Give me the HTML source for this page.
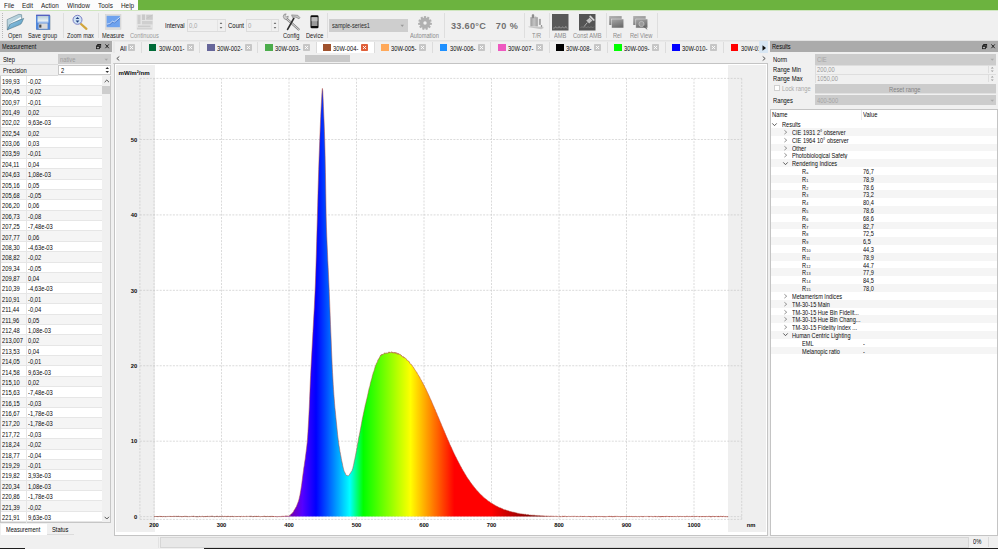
<!DOCTYPE html><html><head><meta charset="utf-8"><style>
*{box-sizing:border-box;margin:0;padding:0}
html,body{width:998px;height:549px;overflow:hidden;background:#f0f0f0;font-family:"Liberation Sans", sans-serif;color:#1a1a1a}
.a{position:absolute}
.t{position:absolute;white-space:nowrap;line-height:1;margin-top:0.8px}
sub{font-size:4.3px;vertical-align:baseline;margin-left:0.3px}
</style></head><body>

<div class="a" style="left:0;top:0;width:998px;height:10px;background:#fcfcfc"></div>
<div class="a" style="left:138px;top:0;width:860px;height:10px;background:#6cb33f"></div>
<div class="a" style="left:0;top:10px;width:998px;height:1px;background:#cfe6bf"></div>
<div class="t" style="transform:scaleX(0.8696);transform-origin:0 0;left:3.8px;top:1.09px;font-size:7.36px">File</div>
<div class="t" style="transform:scaleX(0.8696);transform-origin:0 0;left:21.7px;top:1.09px;font-size:7.36px">Edit</div>
<div class="t" style="transform:scaleX(0.8696);transform-origin:0 0;left:40.8px;top:1.09px;font-size:7.36px">Action</div>
<div class="t" style="transform:scaleX(0.8696);transform-origin:0 0;left:67px;top:1.09px;font-size:7.36px">Window</div>
<div class="t" style="transform:scaleX(0.8696);transform-origin:0 0;left:98.2px;top:1.09px;font-size:7.36px">Tools</div>
<div class="t" style="transform:scaleX(0.8696);transform-origin:0 0;left:121.1px;top:1.09px;font-size:7.36px">Help</div>
<div class="a" style="left:0;top:11px;width:998px;height:29px;background:#f0f0f0"></div>
<div class="a" style="left:2px;top:13px;width:1px;height:25px;border-left:1px dotted #b8b8b8"></div>
<div class="a" style="left:62.5px;top:13px;width:0.8px;height:25px;background:#dedede"></div>
<div class="a" style="left:97.5px;top:13px;width:0.8px;height:25px;background:#dedede"></div>
<div class="a" style="left:327.3px;top:13px;width:0.8px;height:25px;background:#dedede"></div>
<div class="a" style="left:444.3px;top:13px;width:0.8px;height:25px;background:#dedede"></div>
<div class="a" style="left:524.2px;top:13px;width:0.8px;height:25px;background:#dedede"></div>
<div class="a" style="left:548.8px;top:13px;width:0.8px;height:25px;background:#dedede"></div>
<div class="a" style="left:605.6px;top:13px;width:0.8px;height:25px;background:#dedede"></div>
<div class="a" style="left:656.7px;top:13px;width:0.8px;height:25px;background:#dedede"></div>
<div class="t" style="transform:scaleX(0.8696);transform-origin:0 0;left:8px;top:32.58px;font-size:6.55px;color:#222">Open</div>
<div class="t" style="transform:scaleX(0.8696);transform-origin:0 0;left:28px;top:32.58px;font-size:6.55px;color:#222">Save group</div>
<div class="t" style="transform:scaleX(0.8696);transform-origin:0 0;left:66.7px;top:32.58px;font-size:6.55px;color:#222">Zoom max</div>
<div class="t" style="transform:scaleX(0.8696);transform-origin:0 0;left:102px;top:32.58px;font-size:6.55px;color:#222">Measure</div>
<div class="t" style="transform:scaleX(0.8696);transform-origin:0 0;left:129.9px;top:32.58px;font-size:6.55px;color:#9a9a9a">Continuous</div>
<div class="t" style="transform:scaleX(0.8696);transform-origin:0 0;left:283.1px;top:32.58px;font-size:6.55px;color:#222">Config</div>
<div class="t" style="transform:scaleX(0.8696);transform-origin:0 0;left:306px;top:32.58px;font-size:6.55px;color:#222">Device</div>
<div class="t" style="transform:scaleX(0.8696);transform-origin:0 0;left:410.4px;top:32.58px;font-size:6.55px;color:#8a8a8a">Automation</div>
<div class="t" style="transform:scaleX(0.8696);transform-origin:0 0;left:532px;top:32.58px;font-size:6.55px;color:#8a8a8a">T/R</div>
<div class="t" style="transform:scaleX(0.8696);transform-origin:0 0;left:554.4px;top:32.58px;font-size:6.55px;color:#8a8a8a">AMB</div>
<div class="t" style="transform:scaleX(0.8696);transform-origin:0 0;left:573px;top:32.58px;font-size:6.55px;color:#8a8a8a">Const AMB</div>
<div class="t" style="transform:scaleX(0.8696);transform-origin:0 0;left:613.3px;top:32.58px;font-size:6.55px;color:#8a8a8a">Rel</div>
<div class="t" style="transform:scaleX(0.8696);transform-origin:0 0;left:630px;top:32.58px;font-size:6.55px;color:#8a8a8a">Rel View</div>
<svg class="a" style="left:4px;top:11px;width:24px;height:22px;overflow:visible" viewBox="0 0 24 22">
<defs><linearGradient id="fo" x1="0" y1="0" x2="1" y2="1"><stop offset="0" stop-color="#9fd0ea"/><stop offset="1" stop-color="#4d93bd"/></linearGradient>
<linearGradient id="fb" x1="0" y1="0" x2="1" y2="1"><stop offset="0" stop-color="#cfe3ea"/><stop offset="1" stop-color="#8fb6c8"/></linearGradient></defs>
<path d="M3.3,18.8 L3.2,8.6 L14.8,3.3 L17.6,3.7 L17.8,8.5 Z" fill="url(#fb)" stroke="#5f7f8f" stroke-width="0.6"/>
<path d="M5.6,12.6 L16.6,6.0 L17.4,7.6 L6.2,13.8 Z" fill="#ffffff"/>
<path d="M3.3,18.8 L6.2,13.0 L19.7,7.4 L17.6,12.0 Q17.1,13.1 15.9,13.6 Z" fill="url(#fo)" stroke="#4c7487" stroke-width="0.6"/>
</svg>
<svg class="a" style="left:35px;top:14px;width:16px;height:17px;overflow:visible" viewBox="0 0 16 17">
<defs><linearGradient id="fl" x1="0" y1="0" x2="0" y2="1"><stop offset="0" stop-color="#b6cdd8"/><stop offset="1" stop-color="#eef4f6"/></linearGradient></defs>
<rect x="1.2" y="1.3" width="14.2" height="14.8" rx="0.6" fill="#8898a8"/>
<rect x="1" y="0.8" width="13.9" height="14.6" rx="0.6" fill="#4f86db"/>
<rect x="1" y="0.8" width="13.9" height="0.9" fill="#5b4fb4"/>
<rect x="2.5" y="2" width="10.9" height="5.3" fill="url(#fl)"/>
<rect x="2.5" y="7.3" width="10.9" height="1.2" fill="#e4eef8"/>
<rect x="3.6" y="9.4" width="9" height="5.4" fill="#dadada"/>
<rect x="4.2" y="10.6" width="2.2" height="3" fill="#4a4a4a"/>
</svg>
<svg class="a" style="left:70px;top:13px;width:20px;height:19px;overflow:visible" viewBox="0 0 20 19">
<line x1="11" y1="11" x2="16.4" y2="15.8" stroke="#d2a63c" stroke-width="2.3" stroke-linecap="round"/>
<circle cx="7.5" cy="6.8" r="4.5" fill="#cfe3f4" stroke="#7d80c6" stroke-width="1.0"/>
<path d="M7.5,3.9 L9.4,6.1 L5.6,6.1 Z M7.5,9.8 L9.4,7.5 L5.6,7.5 Z" fill="#203d80"/>
</svg>
<svg class="a" style="left:104.5px;top:14px;width:17px;height:16px;overflow:visible" viewBox="0 0 17 16">
<rect x="0.5" y="0.5" width="15.5" height="14.8" fill="#dcdcdc" stroke="#cfcfcf" stroke-width="0.5"/>
<rect x="1.6" y="1.8" width="13.3" height="11.4" fill="#6ea2ee"/>
<path d="M1.8,10.2 L4.8,9.6 L7.4,7.2 L9.3,8.1 L14.8,3.4" fill="none" stroke="#4f7fd0" stroke-width="1.2" transform="translate(0,0.8)"/>
<path d="M1.8,10.2 L4.8,9.6 L7.4,7.2 L9.3,8.1 L14.8,3.4" fill="none" stroke="#d6e4fa" stroke-width="0.9"/>
</svg>
<svg class="a" style="left:132px;top:11px;width:26px;height:20px;overflow:visible" viewBox="0 0 26 20">
<rect x="4.5" y="3.2" width="16.5" height="15.5" fill="#e4e4e4"/>
<rect x="5.5" y="4" width="3" height="9" fill="#cdcdcd"/>
<rect x="10" y="3.5" width="3" height="5.5" fill="#c9c9c9"/>
<rect x="14.2" y="3.8" width="6.5" height="5" fill="#cbcbcb"/>
<path d="M14.5,7.5 L17,6 L20.5,4" stroke="#bdbdbd" stroke-width="0.6" fill="none"/>
<rect x="10" y="10" width="10.5" height="3.4" fill="#cfcfcf"/>
<rect x="6" y="14.5" width="12.5" height="1.6" fill="#cbcbcb"/>
<rect x="5" y="16.8" width="14.8" height="1.6" fill="#d2d2d2"/>
</svg>
<div class="t" style="transform:scaleX(0.8696);transform-origin:0 0;left:164.6px;top:22.34px;font-size:6.90px;color:#0a0a0a">Interval</div>
<div class="t" style="transform:scaleX(0.8696);transform-origin:0 0;left:228px;top:22.34px;font-size:6.90px;color:#0a0a0a">Count</div>
<div class="a" style="left:187.2px;top:19.2px;width:38.4px;height:12.8px;border:1px solid #dcdcdc;background:#f0f0f0"></div>
<div class="t" style="transform:scaleX(0.8696);transform-origin:0 0;left:189.2px;top:22.24px;font-size:6.90px;color:#a8a8a8">0,0</div>
<div class="a" style="left:217.1px;top:20px;width:1px;height:11px;background:#e4e4e4"></div>
<svg class="a" style="left:219.1px;top:21px;width:4px;height:9px;overflow:visible" viewBox="0 0 4 9"><path d="M0.7,3 L2,1.3 L3.3,3 Z M0.7,6 L2,7.7 L3.3,6 Z" fill="#6a6a6a"/></svg>
<div class="a" style="left:246.1px;top:19.2px;width:33.3px;height:12.8px;border:1px solid #dcdcdc;background:#f0f0f0"></div>
<div class="t" style="transform:scaleX(0.8696);transform-origin:0 0;left:248.1px;top:22.24px;font-size:6.90px;color:#a8a8a8">0</div>
<div class="a" style="left:270.9px;top:20px;width:1px;height:11px;background:#e4e4e4"></div>
<svg class="a" style="left:272.9px;top:21px;width:4px;height:9px;overflow:visible" viewBox="0 0 4 9"><path d="M0.7,3 L2,1.3 L3.3,3 Z M0.7,6 L2,7.7 L3.3,6 Z" fill="#6a6a6a"/></svg>
<svg class="a" style="left:278px;top:10px;width:24px;height:22px;overflow:visible" viewBox="0 0 24 22">
<path d="M8.2,8.4 L20.6,19.4" stroke="#6f6f6f" stroke-width="2.1" stroke-linecap="round"/>
<path d="M8.2,8.4 L20.6,19.4" stroke="#d0d0d0" stroke-width="1.2" stroke-linecap="round"/>
<path d="M5.2,6.2 Q5.6,3.6 8.2,3.9 L7.2,5.6 L8.6,7.0 L10.2,6.0 Q10.6,8.6 8.2,9.6 Q5.6,9.6 5.2,6.2 Z" fill="#cfcfcf" stroke="#707070" stroke-width="0.55"/>
<path d="M9.6,19.4 L15.8,8.4" stroke="#2e2e2e" stroke-width="1.7" stroke-linecap="round"/>
<path d="M13.6,4.9 L19.8,5.3 L22.0,7.8 L21.0,8.8 L18.0,7.3 L15.8,7.0 L14.6,7.6 Z" fill="#c4c4c4" stroke="#6a6a6a" stroke-width="0.55"/>
</svg>
<svg class="a" style="left:310px;top:15.3px;width:9px;height:14px;overflow:visible" viewBox="0 0 9 14">
<rect x="0.5" y="0.3" width="8" height="13" rx="1.3" fill="#0d0d0d"/>
<rect x="1.5" y="2.2" width="6" height="8.8" fill="#9a9a9a"/>
<rect x="1.5" y="2.2" width="6" height="4" fill="#bcbcbc"/>
</svg>
<div class="a" style="left:329.1px;top:19px;width:78.5px;height:12.6px;background:#cecece"></div>
<div class="t" style="transform:scaleX(0.8696);transform-origin:0 0;left:331.5px;top:22.39px;font-size:6.44px;color:#2a2a2a">sample-series1</div>
<svg class="a" style="left:399.5px;top:23.5px;width:5px;height:4px;overflow:visible" viewBox="0 0 5 4"><path d="M0.5,0.8 L4,0.8 L2.25,3 Z" fill="#9a9a9a"/></svg>
<svg class="a" style="left:418.3px;top:16px;width:14px;height:14px;overflow:visible" viewBox="0 0 14 14"><g transform="translate(7,7)"><rect x="-1.1" y="-6.9" width="2.2" height="2.6" fill="#b0b0b0" transform="rotate(0.0)"/><rect x="-1.1" y="-6.9" width="2.2" height="2.6" fill="#b0b0b0" transform="rotate(32.7)"/><rect x="-1.1" y="-6.9" width="2.2" height="2.6" fill="#b0b0b0" transform="rotate(65.5)"/><rect x="-1.1" y="-6.9" width="2.2" height="2.6" fill="#b0b0b0" transform="rotate(98.2)"/><rect x="-1.1" y="-6.9" width="2.2" height="2.6" fill="#b0b0b0" transform="rotate(130.9)"/><rect x="-1.1" y="-6.9" width="2.2" height="2.6" fill="#b0b0b0" transform="rotate(163.6)"/><rect x="-1.1" y="-6.9" width="2.2" height="2.6" fill="#b0b0b0" transform="rotate(196.4)"/><rect x="-1.1" y="-6.9" width="2.2" height="2.6" fill="#b0b0b0" transform="rotate(229.1)"/><rect x="-1.1" y="-6.9" width="2.2" height="2.6" fill="#b0b0b0" transform="rotate(261.8)"/><rect x="-1.1" y="-6.9" width="2.2" height="2.6" fill="#b0b0b0" transform="rotate(294.5)"/><rect x="-1.1" y="-6.9" width="2.2" height="2.6" fill="#b0b0b0" transform="rotate(327.3)"/><circle r="5.4" fill="#b0b0b0"/><circle r="1.7" fill="#f0f0f0"/></g></svg>
<div class="t" style="left:451px;top:21.2px;font-size:9.1px;font-weight:bold;color:#707070;letter-spacing:0.3px">33.60°C</div>
<div class="t" style="left:495.7px;top:21.2px;font-size:9.1px;font-weight:bold;color:#707070;letter-spacing:0.5px">70 %</div>
<svg class="a" style="left:526px;top:12px;width:22px;height:20px;overflow:visible" viewBox="0 0 22 20">
<defs><linearGradient id="trg" x1="0" y1="0" x2="1" y2="0"><stop offset="0" stop-color="#9a9a9a"/><stop offset="0.5" stop-color="#c4c4c4"/><stop offset="1" stop-color="#9c9c9c"/></linearGradient></defs>
<path d="M2.2,14.4 L17.2,14.8 L17.6,16.0 L15.3,17.2 L2.8,15.2 Z" fill="#c6c6c6"/>
<rect x="4.4" y="5.2" width="7.4" height="9.2" fill="url(#trg)"/>
<rect x="5.8" y="2.2" width="2.4" height="4" rx="0.8" fill="#8c8c8c"/>
<rect x="8.6" y="4.6" width="1.8" height="2" fill="#b0b0b0"/>
<rect x="12.9" y="6.9" width="2" height="6" fill="#a6a6a6"/>
<rect x="14.9" y="13" width="1.2" height="2.2" fill="#9a9a9a"/>
</svg>
<svg class="a" style="left:551.5px;top:13.8px;width:17px;height:17px;overflow:visible" viewBox="0 0 17 17">
<rect x="0" y="0" width="16.5" height="16.5" fill="#585858"/>
<path d="M1,14.2 L3,13.8 L3.6,12.6 L4.2,13.8 L6.5,13.8 L7.1,12.4 L7.7,13.8 L10,13.8 L10.6,12.6 L11.2,13.8 L13.2,13.8 L13.8,12.2 L14.4,13.8 L15.5,14.2" fill="none" stroke="#a8a8a8" stroke-width="0.6"/>
</svg>
<svg class="a" style="left:578.5px;top:13.8px;width:17px;height:17px;overflow:visible" viewBox="0 0 17 17">
<rect x="0" y="0" width="16.5" height="16.5" fill="#545454"/>
<path d="M1.5,14 L3,12.5 L4.5,14 L6,12.5 L7.5,14 L9,12.5 L10.5,14 L12,12.5 L13.5,14 L15,12.5" fill="none" stroke="#8a8a8a" stroke-width="0.6"/>
<path d="M8.3,8.6 L5.0,12.6" stroke="#cfcfcf" stroke-width="0.7"/>
<path d="M10.4,3.6 L13.6,6.8 L12.2,7.4 L10.2,9.6 L7.2,6.6 L9.6,4.8 Z" fill="#c4c4c4"/>
<path d="M11.2,2.4 L14.8,6" stroke="#d8d8d8" stroke-width="1.7" stroke-linecap="round"/>
</svg>
<svg class="a" style="left:604px;top:11px;width:52px;height:22px;overflow:visible" viewBox="0 0 52 22"><defs><linearGradient id="rg1" x1="0" y1="0" x2="0.3" y2="1"><stop offset="0" stop-color="#b4b4b4"/><stop offset="1" stop-color="#808080"/></linearGradient><linearGradient id="rg2" x1="0" y1="0" x2="0.4" y2="1"><stop offset="0" stop-color="#a8a8a8"/><stop offset="1" stop-color="#6e6e6e"/></linearGradient></defs>
<rect x="5.2" y="5" width="12.5" height="9" fill="url(#rg1)"/>
<rect x="7.6" y="8" width="12.2" height="9" fill="url(#rg2)" stroke="#ececec" stroke-width="0.5"/>
<rect x="29.2" y="5" width="12.5" height="9" fill="url(#rg1)"/>
<rect x="31.8" y="8" width="12" height="9" fill="url(#rg2)" stroke="#ececec" stroke-width="0.5"/>
<circle cx="37.5" cy="13" r="2.6" fill="#9a9a9a" stroke="#d0d0d0" stroke-width="0.6"/>
<path d="M39.4,15 L43.2,18.3" stroke="#5a5a5a" stroke-width="0.9"/>
</svg>
<div class="a" style="left:0;top:39.8px;width:998px;height:0.8px;background:#e2e2e2"></div>
<div class="a" style="left:0px;top:40.8px;width:112px;height:11.5px;background:#ababab"></div>
<div class="t" style="transform:scaleX(0.8696);transform-origin:0 0;left:2.2px;top:42.89px;font-size:6.44px;color:#0a0a0a">Measurement</div>
<svg class="a" style="left:96.2px;top:43.8px;width:5px;height:5.2px;overflow:visible" viewBox="0 0 5 5.2"><rect x="1.7" y="0.5" width="3" height="2.8" fill="none" stroke="#1a1a1a" stroke-width="0.8"/><rect x="1.7" y="0.3" width="3" height="1" fill="#1a1a1a"/><rect x="0.5" y="1.9" width="3" height="2.8" fill="#ababab" stroke="#1a1a1a" stroke-width="0.8"/><rect x="0.5" y="1.7" width="3" height="1" fill="#1a1a1a"/></svg>
<svg class="a" style="left:105px;top:44.2px;width:4.2px;height:4.6px;overflow:visible" viewBox="0 0 4.2 4.6"><path d="M0.4,0.4 L3.8,4.2 M3.8,0.4 L0.4,4.2" stroke="#1a1a1a" stroke-width="0.95"/></svg>
<div class="a" style="left:0;top:52.5px;width:112px;height:23px;background:#f0f0f0"></div>
<div class="a" style="left:0;top:64px;width:58px;height:0.7px;background:#dadada"></div>
<div class="a" style="left:0;top:75px;width:58px;height:0.7px;background:#dadada"></div>
<div class="t" style="transform:scaleX(0.8696);transform-origin:0 0;left:3px;top:55.76px;font-size:6.67px;color:#0a0a0a">Step</div>
<div class="t" style="transform:scaleX(0.8696);transform-origin:0 0;left:3px;top:66.96px;font-size:6.67px;color:#0a0a0a">Precision</div>
<div class="a" style="left:58.2px;top:54.1px;width:52.4px;height:10px;background:#cccccc"></div>
<div class="t" style="transform:scaleX(0.8696);transform-origin:0 0;left:60px;top:56.26px;font-size:6.67px;color:#9d9d9d">native</div>
<svg class="a" style="left:104px;top:57.5px;width:5px;height:4px;overflow:visible" viewBox="0 0 5 4"><path d="M0.5,0.8 L4,0.8 L2.25,2.8 Z" fill="#a8a8a8"/></svg>
<div class="a" style="left:58.2px;top:65.3px;width:52.4px;height:9.6px;background:#fff;border:0.7px solid #c8c8c8"></div>
<div class="t" style="transform:scaleX(0.8696);transform-origin:0 0;left:60.5px;top:66.96px;font-size:6.67px;color:#0a0a0a">2</div>
<svg class="a" style="left:104.5px;top:66.3px;width:5px;height:8px;overflow:visible" viewBox="0 0 5 8"><path d="M0.5,3 L2.25,1 L4,3 Z M0.5,5 L2.25,7 L4,5 Z" fill="#333"/></svg>
<div class="a" style="left:0;top:75.6px;width:111px;height:447.4px;background:#fff;border:0.8px solid #c6c6c6"></div>
<div class="a" style="left:0.8px;top:75.70px;width:101px;height:10.38px;background:#ffffff;border-bottom:0.7px solid #e6e6e6"></div>
<div class="t" style="transform:scaleX(0.8696);transform-origin:0 0;left:2.2px;top:77.96px;font-size:6.67px;color:#0a0a0a">199,93</div>
<div class="t" style="transform:scaleX(0.8696);transform-origin:0 0;left:28px;top:77.96px;font-size:6.67px;color:#0a0a0a">-0,02</div>
<div class="a" style="left:0.8px;top:86.08px;width:101px;height:10.38px;background:#f5f5f5;border-bottom:0.7px solid #e6e6e6"></div>
<div class="t" style="transform:scaleX(0.8696);transform-origin:0 0;left:2.2px;top:88.34px;font-size:6.67px;color:#0a0a0a">200,45</div>
<div class="t" style="transform:scaleX(0.8696);transform-origin:0 0;left:28px;top:88.34px;font-size:6.67px;color:#0a0a0a">-0,02</div>
<div class="a" style="left:0.8px;top:96.47px;width:101px;height:10.38px;background:#ffffff;border-bottom:0.7px solid #e6e6e6"></div>
<div class="t" style="transform:scaleX(0.8696);transform-origin:0 0;left:2.2px;top:98.73px;font-size:6.67px;color:#0a0a0a">200,97</div>
<div class="t" style="transform:scaleX(0.8696);transform-origin:0 0;left:28px;top:98.73px;font-size:6.67px;color:#0a0a0a">-0,01</div>
<div class="a" style="left:0.8px;top:106.85px;width:101px;height:10.38px;background:#f5f5f5;border-bottom:0.7px solid #e6e6e6"></div>
<div class="t" style="transform:scaleX(0.8696);transform-origin:0 0;left:2.2px;top:109.11px;font-size:6.67px;color:#0a0a0a">201,49</div>
<div class="t" style="transform:scaleX(0.8696);transform-origin:0 0;left:28px;top:109.11px;font-size:6.67px;color:#0a0a0a">0,02</div>
<div class="a" style="left:0.8px;top:117.24px;width:101px;height:10.38px;background:#ffffff;border-bottom:0.7px solid #e6e6e6"></div>
<div class="t" style="transform:scaleX(0.8696);transform-origin:0 0;left:2.2px;top:119.50px;font-size:6.67px;color:#0a0a0a">202,02</div>
<div class="t" style="transform:scaleX(0.8696);transform-origin:0 0;left:28px;top:119.50px;font-size:6.67px;color:#0a0a0a">9,63e-03</div>
<div class="a" style="left:0.8px;top:127.62px;width:101px;height:10.38px;background:#f5f5f5;border-bottom:0.7px solid #e6e6e6"></div>
<div class="t" style="transform:scaleX(0.8696);transform-origin:0 0;left:2.2px;top:129.88px;font-size:6.67px;color:#0a0a0a">202,54</div>
<div class="t" style="transform:scaleX(0.8696);transform-origin:0 0;left:28px;top:129.88px;font-size:6.67px;color:#0a0a0a">0,02</div>
<div class="a" style="left:0.8px;top:138.01px;width:101px;height:10.38px;background:#ffffff;border-bottom:0.7px solid #e6e6e6"></div>
<div class="t" style="transform:scaleX(0.8696);transform-origin:0 0;left:2.2px;top:140.27px;font-size:6.67px;color:#0a0a0a">203,06</div>
<div class="t" style="transform:scaleX(0.8696);transform-origin:0 0;left:28px;top:140.27px;font-size:6.67px;color:#0a0a0a">0,03</div>
<div class="a" style="left:0.8px;top:148.39px;width:101px;height:10.38px;background:#f5f5f5;border-bottom:0.7px solid #e6e6e6"></div>
<div class="t" style="transform:scaleX(0.8696);transform-origin:0 0;left:2.2px;top:150.65px;font-size:6.67px;color:#0a0a0a">203,59</div>
<div class="t" style="transform:scaleX(0.8696);transform-origin:0 0;left:28px;top:150.65px;font-size:6.67px;color:#0a0a0a">-0,01</div>
<div class="a" style="left:0.8px;top:158.78px;width:101px;height:10.38px;background:#ffffff;border-bottom:0.7px solid #e6e6e6"></div>
<div class="t" style="transform:scaleX(0.8696);transform-origin:0 0;left:2.2px;top:161.04px;font-size:6.67px;color:#0a0a0a">204,11</div>
<div class="t" style="transform:scaleX(0.8696);transform-origin:0 0;left:28px;top:161.04px;font-size:6.67px;color:#0a0a0a">0,04</div>
<div class="a" style="left:0.8px;top:169.16px;width:101px;height:10.38px;background:#f5f5f5;border-bottom:0.7px solid #e6e6e6"></div>
<div class="t" style="transform:scaleX(0.8696);transform-origin:0 0;left:2.2px;top:171.42px;font-size:6.67px;color:#0a0a0a">204,63</div>
<div class="t" style="transform:scaleX(0.8696);transform-origin:0 0;left:28px;top:171.42px;font-size:6.67px;color:#0a0a0a">1,08e-03</div>
<div class="a" style="left:0.8px;top:179.55px;width:101px;height:10.38px;background:#ffffff;border-bottom:0.7px solid #e6e6e6"></div>
<div class="t" style="transform:scaleX(0.8696);transform-origin:0 0;left:2.2px;top:181.81px;font-size:6.67px;color:#0a0a0a">205,16</div>
<div class="t" style="transform:scaleX(0.8696);transform-origin:0 0;left:28px;top:181.81px;font-size:6.67px;color:#0a0a0a">0,05</div>
<div class="a" style="left:0.8px;top:189.94px;width:101px;height:10.38px;background:#f5f5f5;border-bottom:0.7px solid #e6e6e6"></div>
<div class="t" style="transform:scaleX(0.8696);transform-origin:0 0;left:2.2px;top:192.20px;font-size:6.67px;color:#0a0a0a">205,68</div>
<div class="t" style="transform:scaleX(0.8696);transform-origin:0 0;left:28px;top:192.20px;font-size:6.67px;color:#0a0a0a">-0,05</div>
<div class="a" style="left:0.8px;top:200.32px;width:101px;height:10.38px;background:#ffffff;border-bottom:0.7px solid #e6e6e6"></div>
<div class="t" style="transform:scaleX(0.8696);transform-origin:0 0;left:2.2px;top:202.58px;font-size:6.67px;color:#0a0a0a">206,20</div>
<div class="t" style="transform:scaleX(0.8696);transform-origin:0 0;left:28px;top:202.58px;font-size:6.67px;color:#0a0a0a">0,06</div>
<div class="a" style="left:0.8px;top:210.70px;width:101px;height:10.38px;background:#f5f5f5;border-bottom:0.7px solid #e6e6e6"></div>
<div class="t" style="transform:scaleX(0.8696);transform-origin:0 0;left:2.2px;top:212.96px;font-size:6.67px;color:#0a0a0a">206,73</div>
<div class="t" style="transform:scaleX(0.8696);transform-origin:0 0;left:28px;top:212.96px;font-size:6.67px;color:#0a0a0a">-0,08</div>
<div class="a" style="left:0.8px;top:221.09px;width:101px;height:10.38px;background:#ffffff;border-bottom:0.7px solid #e6e6e6"></div>
<div class="t" style="transform:scaleX(0.8696);transform-origin:0 0;left:2.2px;top:223.35px;font-size:6.67px;color:#0a0a0a">207,25</div>
<div class="t" style="transform:scaleX(0.8696);transform-origin:0 0;left:28px;top:223.35px;font-size:6.67px;color:#0a0a0a">-7,48e-03</div>
<div class="a" style="left:0.8px;top:231.47px;width:101px;height:10.38px;background:#f5f5f5;border-bottom:0.7px solid #e6e6e6"></div>
<div class="t" style="transform:scaleX(0.8696);transform-origin:0 0;left:2.2px;top:233.73px;font-size:6.67px;color:#0a0a0a">207,77</div>
<div class="t" style="transform:scaleX(0.8696);transform-origin:0 0;left:28px;top:233.73px;font-size:6.67px;color:#0a0a0a">0,06</div>
<div class="a" style="left:0.8px;top:241.86px;width:101px;height:10.38px;background:#ffffff;border-bottom:0.7px solid #e6e6e6"></div>
<div class="t" style="transform:scaleX(0.8696);transform-origin:0 0;left:2.2px;top:244.12px;font-size:6.67px;color:#0a0a0a">208,30</div>
<div class="t" style="transform:scaleX(0.8696);transform-origin:0 0;left:28px;top:244.12px;font-size:6.67px;color:#0a0a0a">-4,63e-03</div>
<div class="a" style="left:0.8px;top:252.24px;width:101px;height:10.38px;background:#f5f5f5;border-bottom:0.7px solid #e6e6e6"></div>
<div class="t" style="transform:scaleX(0.8696);transform-origin:0 0;left:2.2px;top:254.50px;font-size:6.67px;color:#0a0a0a">208,82</div>
<div class="t" style="transform:scaleX(0.8696);transform-origin:0 0;left:28px;top:254.50px;font-size:6.67px;color:#0a0a0a">-0,02</div>
<div class="a" style="left:0.8px;top:262.63px;width:101px;height:10.38px;background:#ffffff;border-bottom:0.7px solid #e6e6e6"></div>
<div class="t" style="transform:scaleX(0.8696);transform-origin:0 0;left:2.2px;top:264.89px;font-size:6.67px;color:#0a0a0a">209,34</div>
<div class="t" style="transform:scaleX(0.8696);transform-origin:0 0;left:28px;top:264.89px;font-size:6.67px;color:#0a0a0a">-0,05</div>
<div class="a" style="left:0.8px;top:273.01px;width:101px;height:10.38px;background:#f5f5f5;border-bottom:0.7px solid #e6e6e6"></div>
<div class="t" style="transform:scaleX(0.8696);transform-origin:0 0;left:2.2px;top:275.27px;font-size:6.67px;color:#0a0a0a">209,87</div>
<div class="t" style="transform:scaleX(0.8696);transform-origin:0 0;left:28px;top:275.27px;font-size:6.67px;color:#0a0a0a">0,04</div>
<div class="a" style="left:0.8px;top:283.40px;width:101px;height:10.38px;background:#ffffff;border-bottom:0.7px solid #e6e6e6"></div>
<div class="t" style="transform:scaleX(0.8696);transform-origin:0 0;left:2.2px;top:285.66px;font-size:6.67px;color:#0a0a0a">210,39</div>
<div class="t" style="transform:scaleX(0.8696);transform-origin:0 0;left:28px;top:285.66px;font-size:6.67px;color:#0a0a0a">-4,63e-03</div>
<div class="a" style="left:0.8px;top:293.78px;width:101px;height:10.38px;background:#f5f5f5;border-bottom:0.7px solid #e6e6e6"></div>
<div class="t" style="transform:scaleX(0.8696);transform-origin:0 0;left:2.2px;top:296.04px;font-size:6.67px;color:#0a0a0a">210,91</div>
<div class="t" style="transform:scaleX(0.8696);transform-origin:0 0;left:28px;top:296.04px;font-size:6.67px;color:#0a0a0a">-0,01</div>
<div class="a" style="left:0.8px;top:304.17px;width:101px;height:10.38px;background:#ffffff;border-bottom:0.7px solid #e6e6e6"></div>
<div class="t" style="transform:scaleX(0.8696);transform-origin:0 0;left:2.2px;top:306.43px;font-size:6.67px;color:#0a0a0a">211,44</div>
<div class="t" style="transform:scaleX(0.8696);transform-origin:0 0;left:28px;top:306.43px;font-size:6.67px;color:#0a0a0a">-0,04</div>
<div class="a" style="left:0.8px;top:314.55px;width:101px;height:10.38px;background:#f5f5f5;border-bottom:0.7px solid #e6e6e6"></div>
<div class="t" style="transform:scaleX(0.8696);transform-origin:0 0;left:2.2px;top:316.81px;font-size:6.67px;color:#0a0a0a">211,96</div>
<div class="t" style="transform:scaleX(0.8696);transform-origin:0 0;left:28px;top:316.81px;font-size:6.67px;color:#0a0a0a">0,05</div>
<div class="a" style="left:0.8px;top:324.94px;width:101px;height:10.38px;background:#ffffff;border-bottom:0.7px solid #e6e6e6"></div>
<div class="t" style="transform:scaleX(0.8696);transform-origin:0 0;left:2.2px;top:327.20px;font-size:6.67px;color:#0a0a0a">212,48</div>
<div class="t" style="transform:scaleX(0.8696);transform-origin:0 0;left:28px;top:327.20px;font-size:6.67px;color:#0a0a0a">1,08e-03</div>
<div class="a" style="left:0.8px;top:335.32px;width:101px;height:10.38px;background:#f5f5f5;border-bottom:0.7px solid #e6e6e6"></div>
<div class="t" style="transform:scaleX(0.8696);transform-origin:0 0;left:2.2px;top:337.58px;font-size:6.67px;color:#0a0a0a">213,007</div>
<div class="t" style="transform:scaleX(0.8696);transform-origin:0 0;left:28px;top:337.58px;font-size:6.67px;color:#0a0a0a">0,02</div>
<div class="a" style="left:0.8px;top:345.71px;width:101px;height:10.38px;background:#ffffff;border-bottom:0.7px solid #e6e6e6"></div>
<div class="t" style="transform:scaleX(0.8696);transform-origin:0 0;left:2.2px;top:347.97px;font-size:6.67px;color:#0a0a0a">213,53</div>
<div class="t" style="transform:scaleX(0.8696);transform-origin:0 0;left:28px;top:347.97px;font-size:6.67px;color:#0a0a0a">0,04</div>
<div class="a" style="left:0.8px;top:356.09px;width:101px;height:10.38px;background:#f5f5f5;border-bottom:0.7px solid #e6e6e6"></div>
<div class="t" style="transform:scaleX(0.8696);transform-origin:0 0;left:2.2px;top:358.35px;font-size:6.67px;color:#0a0a0a">214,05</div>
<div class="t" style="transform:scaleX(0.8696);transform-origin:0 0;left:28px;top:358.35px;font-size:6.67px;color:#0a0a0a">-0,01</div>
<div class="a" style="left:0.8px;top:366.48px;width:101px;height:10.38px;background:#ffffff;border-bottom:0.7px solid #e6e6e6"></div>
<div class="t" style="transform:scaleX(0.8696);transform-origin:0 0;left:2.2px;top:368.74px;font-size:6.67px;color:#0a0a0a">214,58</div>
<div class="t" style="transform:scaleX(0.8696);transform-origin:0 0;left:28px;top:368.74px;font-size:6.67px;color:#0a0a0a">9,63e-03</div>
<div class="a" style="left:0.8px;top:376.87px;width:101px;height:10.38px;background:#f5f5f5;border-bottom:0.7px solid #e6e6e6"></div>
<div class="t" style="transform:scaleX(0.8696);transform-origin:0 0;left:2.2px;top:379.13px;font-size:6.67px;color:#0a0a0a">215,10</div>
<div class="t" style="transform:scaleX(0.8696);transform-origin:0 0;left:28px;top:379.13px;font-size:6.67px;color:#0a0a0a">0,02</div>
<div class="a" style="left:0.8px;top:387.25px;width:101px;height:10.38px;background:#ffffff;border-bottom:0.7px solid #e6e6e6"></div>
<div class="t" style="transform:scaleX(0.8696);transform-origin:0 0;left:2.2px;top:389.51px;font-size:6.67px;color:#0a0a0a">215,63</div>
<div class="t" style="transform:scaleX(0.8696);transform-origin:0 0;left:28px;top:389.51px;font-size:6.67px;color:#0a0a0a">-7,48e-03</div>
<div class="a" style="left:0.8px;top:397.63px;width:101px;height:10.38px;background:#f5f5f5;border-bottom:0.7px solid #e6e6e6"></div>
<div class="t" style="transform:scaleX(0.8696);transform-origin:0 0;left:2.2px;top:399.89px;font-size:6.67px;color:#0a0a0a">216,15</div>
<div class="t" style="transform:scaleX(0.8696);transform-origin:0 0;left:28px;top:399.89px;font-size:6.67px;color:#0a0a0a">-0,03</div>
<div class="a" style="left:0.8px;top:408.02px;width:101px;height:10.38px;background:#ffffff;border-bottom:0.7px solid #e6e6e6"></div>
<div class="t" style="transform:scaleX(0.8696);transform-origin:0 0;left:2.2px;top:410.28px;font-size:6.67px;color:#0a0a0a">216,67</div>
<div class="t" style="transform:scaleX(0.8696);transform-origin:0 0;left:28px;top:410.28px;font-size:6.67px;color:#0a0a0a">-1,78e-03</div>
<div class="a" style="left:0.8px;top:418.40px;width:101px;height:10.38px;background:#f5f5f5;border-bottom:0.7px solid #e6e6e6"></div>
<div class="t" style="transform:scaleX(0.8696);transform-origin:0 0;left:2.2px;top:420.66px;font-size:6.67px;color:#0a0a0a">217,20</div>
<div class="t" style="transform:scaleX(0.8696);transform-origin:0 0;left:28px;top:420.66px;font-size:6.67px;color:#0a0a0a">-1,78e-03</div>
<div class="a" style="left:0.8px;top:428.79px;width:101px;height:10.38px;background:#ffffff;border-bottom:0.7px solid #e6e6e6"></div>
<div class="t" style="transform:scaleX(0.8696);transform-origin:0 0;left:2.2px;top:431.05px;font-size:6.67px;color:#0a0a0a">217,72</div>
<div class="t" style="transform:scaleX(0.8696);transform-origin:0 0;left:28px;top:431.05px;font-size:6.67px;color:#0a0a0a">-0,03</div>
<div class="a" style="left:0.8px;top:439.17px;width:101px;height:10.38px;background:#f5f5f5;border-bottom:0.7px solid #e6e6e6"></div>
<div class="t" style="transform:scaleX(0.8696);transform-origin:0 0;left:2.2px;top:441.43px;font-size:6.67px;color:#0a0a0a">218,24</div>
<div class="t" style="transform:scaleX(0.8696);transform-origin:0 0;left:28px;top:441.43px;font-size:6.67px;color:#0a0a0a">-0,02</div>
<div class="a" style="left:0.8px;top:449.56px;width:101px;height:10.38px;background:#ffffff;border-bottom:0.7px solid #e6e6e6"></div>
<div class="t" style="transform:scaleX(0.8696);transform-origin:0 0;left:2.2px;top:451.82px;font-size:6.67px;color:#0a0a0a">218,77</div>
<div class="t" style="transform:scaleX(0.8696);transform-origin:0 0;left:28px;top:451.82px;font-size:6.67px;color:#0a0a0a">-0,04</div>
<div class="a" style="left:0.8px;top:459.94px;width:101px;height:10.38px;background:#f5f5f5;border-bottom:0.7px solid #e6e6e6"></div>
<div class="t" style="transform:scaleX(0.8696);transform-origin:0 0;left:2.2px;top:462.20px;font-size:6.67px;color:#0a0a0a">219,29</div>
<div class="t" style="transform:scaleX(0.8696);transform-origin:0 0;left:28px;top:462.20px;font-size:6.67px;color:#0a0a0a">-0,01</div>
<div class="a" style="left:0.8px;top:470.33px;width:101px;height:10.38px;background:#ffffff;border-bottom:0.7px solid #e6e6e6"></div>
<div class="t" style="transform:scaleX(0.8696);transform-origin:0 0;left:2.2px;top:472.59px;font-size:6.67px;color:#0a0a0a">219,82</div>
<div class="t" style="transform:scaleX(0.8696);transform-origin:0 0;left:28px;top:472.59px;font-size:6.67px;color:#0a0a0a">3,93e-03</div>
<div class="a" style="left:0.8px;top:480.71px;width:101px;height:10.38px;background:#f5f5f5;border-bottom:0.7px solid #e6e6e6"></div>
<div class="t" style="transform:scaleX(0.8696);transform-origin:0 0;left:2.2px;top:482.97px;font-size:6.67px;color:#0a0a0a">220,34</div>
<div class="t" style="transform:scaleX(0.8696);transform-origin:0 0;left:28px;top:482.97px;font-size:6.67px;color:#0a0a0a">1,08e-03</div>
<div class="a" style="left:0.8px;top:491.10px;width:101px;height:10.38px;background:#ffffff;border-bottom:0.7px solid #e6e6e6"></div>
<div class="t" style="transform:scaleX(0.8696);transform-origin:0 0;left:2.2px;top:493.36px;font-size:6.67px;color:#0a0a0a">220,86</div>
<div class="t" style="transform:scaleX(0.8696);transform-origin:0 0;left:28px;top:493.36px;font-size:6.67px;color:#0a0a0a">-1,78e-03</div>
<div class="a" style="left:0.8px;top:501.48px;width:101px;height:10.38px;background:#f5f5f5;border-bottom:0.7px solid #e6e6e6"></div>
<div class="t" style="transform:scaleX(0.8696);transform-origin:0 0;left:2.2px;top:503.74px;font-size:6.67px;color:#0a0a0a">221,39</div>
<div class="t" style="transform:scaleX(0.8696);transform-origin:0 0;left:28px;top:503.74px;font-size:6.67px;color:#0a0a0a">-0,02</div>
<div class="a" style="left:0.8px;top:511.87px;width:101px;height:10.38px;background:#ffffff;border-bottom:0.7px solid #e6e6e6"></div>
<div class="t" style="transform:scaleX(0.8696);transform-origin:0 0;left:2.2px;top:514.13px;font-size:6.67px;color:#0a0a0a">221,91</div>
<div class="t" style="transform:scaleX(0.8696);transform-origin:0 0;left:28px;top:514.13px;font-size:6.67px;color:#0a0a0a">9,63e-03</div>
<div class="a" style="left:26px;top:76.19999999999999px;width:0.6px;height:446.4px;background:#e6e6e6"></div>
<div class="a" style="left:101.6px;top:76.39999999999999px;width:8.6px;height:445.79999999999995px;background:#f0f0f0"></div>
<svg class="a" style="left:103.8px;top:78.5px;width:6px;height:4px;overflow:visible" viewBox="0 0 6 4"><path d="M0.6,3.2 L2.8,1 L5,3.2" fill="none" stroke="#444" stroke-width="0.9"/></svg>
<div class="a" style="left:102.2px;top:85.5px;width:7.6px;height:8.3px;background:#cdcdcd"></div>
<svg class="a" style="left:103.8px;top:515.5px;width:6px;height:4px;overflow:visible" viewBox="0 0 6 4"><path d="M0.6,0.8 L2.8,3 L5,0.8" fill="none" stroke="#444" stroke-width="0.9"/></svg>
<div class="a" style="left:0.8px;top:523.8px;width:46px;height:11.2px;background:#fff"></div>
<div class="t" style="transform:scaleX(0.8696);transform-origin:0 0;left:6px;top:526.29px;font-size:6.44px;color:#0a0a0a">Measurement</div>
<div class="t" style="transform:scaleX(0.8696);transform-origin:0 0;left:52px;top:526.06px;font-size:6.67px;color:#0a0a0a">Status</div>
<div class="a" style="left:47px;top:534.3px;width:27px;height:0.6px;background:#dcdcdc"></div>
<div class="a" style="left:113px;top:40.6px;width:655px;height:12.6px;background:#e9e9e9"></div>
<div class="a" style="left:113px;top:52.6px;width:655px;height:0.8px;background:#c8c8c8"></div>
<div class="a" style="left:114.5px;top:42px;width:27.5px;height:11px;background:#f0f0f0;border-right:0.6px solid #dcdcdc"></div>
<div class="t" style="transform:scaleX(0.8696);transform-origin:0 0;left:119.8px;top:45.26px;font-size:6.67px;color:#0a0a0a">All</div>
<svg class="a" style="left:128px;top:44.2px;width:7px;height:7px;overflow:visible" viewBox="0 0 7 7"><rect x="0" y="0" width="7" height="7" rx="0.8" fill="#c6c6c6"/><path d="M2,2 L5,5 M5,2 L2,5" stroke="#fff" stroke-width="0.9"/></svg>
<div class="a" style="left:142.00px;top:42px;width:58.22px;height:11px;background:#f0f0f0;border-right:0.6px solid #dcdcdc"></div>
<div class="a" style="left:148.50px;top:44px;width:7.8px;height:7.2px;background:#006b38"></div>
<div class="t" style="transform:scaleX(0.8696);transform-origin:0 0;left:158.50px;top:45.46px;font-size:6.67px;color:#0a0a0a">30W-001-</div>
<svg class="a" style="left:186.5px;top:44.2px;width:7px;height:7px;overflow:visible" viewBox="0 0 7 7"><rect x="0" y="0" width="7" height="7" rx="0.8" fill="#c6c6c6"/><path d="M2,2 L5,5 M5,2 L2,5" stroke="#fff" stroke-width="0.9"/></svg>
<div class="a" style="left:200.22px;top:42px;width:58.22px;height:11px;background:#f0f0f0;border-right:0.6px solid #dcdcdc"></div>
<div class="a" style="left:206.72px;top:44px;width:7.8px;height:7.2px;background:#66669a"></div>
<div class="t" style="transform:scaleX(0.8696);transform-origin:0 0;left:216.72px;top:45.46px;font-size:6.67px;color:#0a0a0a">30W-002-</div>
<svg class="a" style="left:244.72px;top:44.2px;width:7px;height:7px;overflow:visible" viewBox="0 0 7 7"><rect x="0" y="0" width="7" height="7" rx="0.8" fill="#c6c6c6"/><path d="M2,2 L5,5 M5,2 L2,5" stroke="#fff" stroke-width="0.9"/></svg>
<div class="a" style="left:258.44px;top:42px;width:58.22px;height:11px;background:#f0f0f0;border-right:0.6px solid #dcdcdc"></div>
<div class="a" style="left:264.94px;top:44px;width:7.8px;height:7.2px;background:#4cad4c"></div>
<div class="t" style="transform:scaleX(0.8696);transform-origin:0 0;left:274.94px;top:45.46px;font-size:6.67px;color:#0a0a0a">30W-003-</div>
<svg class="a" style="left:302.94px;top:44.2px;width:7px;height:7px;overflow:visible" viewBox="0 0 7 7"><rect x="0" y="0" width="7" height="7" rx="0.8" fill="#c6c6c6"/><path d="M2,2 L5,5 M5,2 L2,5" stroke="#fff" stroke-width="0.9"/></svg>
<div class="a" style="left:316.66px;top:41.5px;width:58.22px;height:11.5px;background:#ffffff;border-right:0.6px solid #dcdcdc"></div>
<div class="a" style="left:323.16px;top:44px;width:7.8px;height:7.2px;background:#a0522d"></div>
<div class="t" style="transform:scaleX(0.8696);transform-origin:0 0;left:333.16px;top:45.46px;font-size:6.67px;color:#0a0a0a">30W-004-</div>
<svg class="a" style="left:361.15999999999997px;top:44.2px;width:7px;height:7px;overflow:visible" viewBox="0 0 7 7"><rect x="0" y="0" width="7" height="7" rx="0.8" fill="#e0603a"/><path d="M2,2 L5,5 M5,2 L2,5" stroke="#fff" stroke-width="0.9"/></svg>
<div class="a" style="left:374.88px;top:42px;width:58.22px;height:11px;background:#f0f0f0;border-right:0.6px solid #dcdcdc"></div>
<div class="a" style="left:381.38px;top:44px;width:7.8px;height:7.2px;background:#ffa95a"></div>
<div class="t" style="transform:scaleX(0.8696);transform-origin:0 0;left:391.38px;top:45.46px;font-size:6.67px;color:#0a0a0a">30W-005-</div>
<svg class="a" style="left:419.38px;top:44.2px;width:7px;height:7px;overflow:visible" viewBox="0 0 7 7"><rect x="0" y="0" width="7" height="7" rx="0.8" fill="#c6c6c6"/><path d="M2,2 L5,5 M5,2 L2,5" stroke="#fff" stroke-width="0.9"/></svg>
<div class="a" style="left:433.10px;top:42px;width:58.22px;height:11px;background:#f0f0f0;border-right:0.6px solid #dcdcdc"></div>
<div class="a" style="left:439.60px;top:44px;width:7.8px;height:7.2px;background:#1e90ff"></div>
<div class="t" style="transform:scaleX(0.8696);transform-origin:0 0;left:449.60px;top:45.46px;font-size:6.67px;color:#0a0a0a">30W-006-</div>
<svg class="a" style="left:477.6px;top:44.2px;width:7px;height:7px;overflow:visible" viewBox="0 0 7 7"><rect x="0" y="0" width="7" height="7" rx="0.8" fill="#c6c6c6"/><path d="M2,2 L5,5 M5,2 L2,5" stroke="#fff" stroke-width="0.9"/></svg>
<div class="a" style="left:491.32px;top:42px;width:58.22px;height:11px;background:#f0f0f0;border-right:0.6px solid #dcdcdc"></div>
<div class="a" style="left:497.82px;top:44px;width:7.8px;height:7.2px;background:#ee59c0"></div>
<div class="t" style="transform:scaleX(0.8696);transform-origin:0 0;left:507.82px;top:45.46px;font-size:6.67px;color:#0a0a0a">30W-007-</div>
<svg class="a" style="left:535.8199999999999px;top:44.2px;width:7px;height:7px;overflow:visible" viewBox="0 0 7 7"><rect x="0" y="0" width="7" height="7" rx="0.8" fill="#c6c6c6"/><path d="M2,2 L5,5 M5,2 L2,5" stroke="#fff" stroke-width="0.9"/></svg>
<div class="a" style="left:549.54px;top:42px;width:58.22px;height:11px;background:#f0f0f0;border-right:0.6px solid #dcdcdc"></div>
<div class="a" style="left:556.04px;top:44px;width:7.8px;height:7.2px;background:#000000"></div>
<div class="t" style="transform:scaleX(0.8696);transform-origin:0 0;left:566.04px;top:45.46px;font-size:6.67px;color:#0a0a0a">30W-008-</div>
<svg class="a" style="left:594.04px;top:44.2px;width:7px;height:7px;overflow:visible" viewBox="0 0 7 7"><rect x="0" y="0" width="7" height="7" rx="0.8" fill="#c6c6c6"/><path d="M2,2 L5,5 M5,2 L2,5" stroke="#fff" stroke-width="0.9"/></svg>
<div class="a" style="left:607.76px;top:42px;width:58.22px;height:11px;background:#f0f0f0;border-right:0.6px solid #dcdcdc"></div>
<div class="a" style="left:614.26px;top:44px;width:7.8px;height:7.2px;background:#00ff00"></div>
<div class="t" style="transform:scaleX(0.8696);transform-origin:0 0;left:624.26px;top:45.46px;font-size:6.67px;color:#0a0a0a">30W-009-</div>
<svg class="a" style="left:652.26px;top:44.2px;width:7px;height:7px;overflow:visible" viewBox="0 0 7 7"><rect x="0" y="0" width="7" height="7" rx="0.8" fill="#c6c6c6"/><path d="M2,2 L5,5 M5,2 L2,5" stroke="#fff" stroke-width="0.9"/></svg>
<div class="a" style="left:665.98px;top:42px;width:58.22px;height:11px;background:#f0f0f0;border-right:0.6px solid #dcdcdc"></div>
<div class="a" style="left:672.48px;top:44px;width:7.8px;height:7.2px;background:#0000ff"></div>
<div class="t" style="transform:scaleX(0.8696);transform-origin:0 0;left:682.48px;top:45.46px;font-size:6.67px;color:#0a0a0a">30W-010-</div>
<svg class="a" style="left:710.48px;top:44.2px;width:7px;height:7px;overflow:visible" viewBox="0 0 7 7"><rect x="0" y="0" width="7" height="7" rx="0.8" fill="#c6c6c6"/><path d="M2,2 L5,5 M5,2 L2,5" stroke="#fff" stroke-width="0.9"/></svg>
<div class="a" style="left:724.20px;top:42px;width:58.22px;height:11px;background:#f0f0f0;border-right:0.6px solid #dcdcdc"></div>
<div class="a" style="left:730.70px;top:44px;width:7.8px;height:7.2px;background:#ff0000"></div>
<div class="a" style="left:740.70px;top:42px;width:18.30px;height:11px;overflow:hidden"><div class="t" style="transform:scaleX(0.8696);transform-origin:0 0;left:0;top:3.46px;font-size:6.67px;color:#0a0a0a">30W-011-</div></div>
<svg class="a" style="left:752.5px;top:45px;width:4px;height:5px;overflow:visible" viewBox="0 0 4 5"><path d="M3.5,0.5 L0.5,2.5 L3.5,4.5 Z" fill="#b0b0b0"/></svg>
<div class="a" style="left:759px;top:41px;width:8.8px;height:12px;background:#d7e6f3"></div>
<svg class="a" style="left:761.5px;top:44.8px;width:5px;height:6px;overflow:visible" viewBox="0 0 5 6"><path d="M0.5,0.3 L4,3 L0.5,5.7 Z" fill="#111"/></svg>
<div class="a" style="left:113px;top:53.4px;width:655px;height:9.8px;background:#f0f0f0"></div>
<svg class="a" style="left:115.5px;top:55.8px;width:4px;height:5px;overflow:visible" viewBox="0 0 4 5"><path d="M3.3,0.5 L0.8,2.5 L3.3,4.5" fill="none" stroke="#333" stroke-width="0.8"/></svg>
<div class="a" style="left:304.8px;top:54.8px;width:45px;height:7px;background:#c9c9c9"></div>
<svg class="a" style="left:761.5px;top:55.8px;width:4px;height:5px;overflow:visible" viewBox="0 0 4 5"><path d="M0.7,0.5 L3.2,2.5 L0.7,4.5" fill="none" stroke="#333" stroke-width="0.8"/></svg>
<div class="a" style="left:113px;top:62.8px;width:655px;height:0.7px;background:#d0d0d0"></div>
<div class="a" style="left:114px;top:63.4px;width:654px;height:472.4px;background:#ffffff;border:0.8px solid #c4c4c4"></div>
<div class="a" style="left:115.6px;top:65px;width:39.4px;height:466.8px;background:#efefef"></div>
<div class="a" style="left:728px;top:65px;width:37.5px;height:467px;background:#efefef"></div>
<svg class="a" style="left:0;top:0;width:998px;height:549px" viewBox="0 0 998 549"><defs><linearGradient id="sp" gradientUnits="userSpaceOnUse" x1="154.00" y1="0" x2="727.75" y2="0"><stop offset="0.2000" stop-color="#000000"/><stop offset="0.2059" stop-color="#000000"/><stop offset="0.2118" stop-color="#4c004c"/><stop offset="0.2176" stop-color="#5a0062"/><stop offset="0.2235" stop-color="#640079"/><stop offset="0.2294" stop-color="#6b008f"/><stop offset="0.2353" stop-color="#6e00a5"/><stop offset="0.2412" stop-color="#6d00bc"/><stop offset="0.2471" stop-color="#6900d2"/><stop offset="0.2529" stop-color="#6000e8"/><stop offset="0.2588" stop-color="#5500ff"/><stop offset="0.2647" stop-color="#3f00ff"/><stop offset="0.2706" stop-color="#2a00ff"/><stop offset="0.2765" stop-color="#1500ff"/><stop offset="0.2824" stop-color="#0000ff"/><stop offset="0.2882" stop-color="#0019ff"/><stop offset="0.2941" stop-color="#0033ff"/><stop offset="0.3000" stop-color="#004cff"/><stop offset="0.3059" stop-color="#0066ff"/><stop offset="0.3118" stop-color="#007fff"/><stop offset="0.3176" stop-color="#0099ff"/><stop offset="0.3235" stop-color="#00b2ff"/><stop offset="0.3294" stop-color="#00ccff"/><stop offset="0.3353" stop-color="#00e5ff"/><stop offset="0.3412" stop-color="#00ffff"/><stop offset="0.3471" stop-color="#00ffbf"/><stop offset="0.3529" stop-color="#00ff7f"/><stop offset="0.3588" stop-color="#00ff3f"/><stop offset="0.3647" stop-color="#00ff00"/><stop offset="0.3706" stop-color="#12ff00"/><stop offset="0.3765" stop-color="#24ff00"/><stop offset="0.3824" stop-color="#36ff00"/><stop offset="0.3882" stop-color="#48ff00"/><stop offset="0.3941" stop-color="#5bff00"/><stop offset="0.4000" stop-color="#6dff00"/><stop offset="0.4059" stop-color="#7fff00"/><stop offset="0.4118" stop-color="#91ff00"/><stop offset="0.4176" stop-color="#a3ff00"/><stop offset="0.4235" stop-color="#b6ff00"/><stop offset="0.4294" stop-color="#c8ff00"/><stop offset="0.4353" stop-color="#daff00"/><stop offset="0.4412" stop-color="#ecff00"/><stop offset="0.4471" stop-color="#ffff00"/><stop offset="0.4529" stop-color="#ffeb00"/><stop offset="0.4588" stop-color="#ffd700"/><stop offset="0.4647" stop-color="#ffc400"/><stop offset="0.4706" stop-color="#ffb000"/><stop offset="0.4765" stop-color="#ff9c00"/><stop offset="0.4824" stop-color="#ff8900"/><stop offset="0.4882" stop-color="#ff7500"/><stop offset="0.4941" stop-color="#ff6200"/><stop offset="0.5000" stop-color="#ff4e00"/><stop offset="0.5059" stop-color="#ff3a00"/><stop offset="0.5118" stop-color="#ff2700"/><stop offset="0.5176" stop-color="#ff1300"/><stop offset="0.5235" stop-color="#ff0000"/><stop offset="0.5294" stop-color="#ff0000"/><stop offset="0.5353" stop-color="#ff0000"/><stop offset="0.5412" stop-color="#ff0000"/><stop offset="0.5471" stop-color="#ff0000"/><stop offset="0.5529" stop-color="#ff0000"/><stop offset="0.5588" stop-color="#ff0000"/><stop offset="0.5647" stop-color="#ff0000"/><stop offset="0.5706" stop-color="#ff0000"/><stop offset="0.5765" stop-color="#ff0000"/><stop offset="0.5824" stop-color="#ff0000"/><stop offset="0.5882" stop-color="#ff0000"/><stop offset="0.5941" stop-color="#f30000"/><stop offset="0.6000" stop-color="#e80000"/><stop offset="0.6059" stop-color="#dd0000"/><stop offset="0.6118" stop-color="#d20000"/><stop offset="0.6176" stop-color="#c70000"/><stop offset="0.6235" stop-color="#bc0000"/><stop offset="0.6294" stop-color="#b00000"/><stop offset="0.6353" stop-color="#a50000"/><stop offset="0.6412" stop-color="#9a0000"/><stop offset="0.6471" stop-color="#8f0000"/><stop offset="0.6529" stop-color="#840000"/><stop offset="0.6588" stop-color="#790000"/><stop offset="0.6647" stop-color="#720000"/><stop offset="0.6706" stop-color="#720000"/><stop offset="0.6765" stop-color="#720000"/><stop offset="0.6824" stop-color="#720000"/><stop offset="0.6882" stop-color="#720000"/><stop offset="0.6941" stop-color="#720000"/><stop offset="0.7000" stop-color="#720000"/></linearGradient></defs><g stroke="#c2c2c2" stroke-width="0.6" stroke-dasharray="2,1.3"><line x1="139.90" y1="78.4" x2="139.90" y2="519.4" /><line x1="154.00" y1="78.4" x2="154.00" y2="519.4" /><line x1="221.50" y1="78.4" x2="221.50" y2="519.4" /><line x1="289.00" y1="78.4" x2="289.00" y2="519.4" /><line x1="356.50" y1="78.4" x2="356.50" y2="519.4" /><line x1="424.00" y1="78.4" x2="424.00" y2="519.4" /><line x1="491.50" y1="78.4" x2="491.50" y2="519.4" /><line x1="559.00" y1="78.4" x2="559.00" y2="519.4" /><line x1="626.50" y1="78.4" x2="626.50" y2="519.4" /><line x1="694.00" y1="78.4" x2="694.00" y2="519.4" /><line x1="741.70" y1="78.4" x2="741.70" y2="519.4" /><line x1="139.9" y1="78.40" x2="741.7" y2="78.40" /><line x1="139.9" y1="516.60" x2="741.7" y2="516.60" /><line x1="139.9" y1="441.18" x2="741.7" y2="441.18" /><line x1="139.9" y1="365.76" x2="741.7" y2="365.76" /><line x1="139.9" y1="290.34" x2="741.7" y2="290.34" /><line x1="139.9" y1="214.92" x2="741.7" y2="214.92" /><line x1="139.9" y1="139.50" x2="741.7" y2="139.50" /><line x1="139.9" y1="519.40" x2="741.7" y2="519.40" /></g><path d="M154.00,516.60 L154.00,516.64 L154.34,516.82 L154.68,516.29 L155.01,516.90 L155.35,516.41 L155.69,516.59 L156.03,516.92 L156.36,516.44 L156.70,516.94 L157.04,516.52 L157.38,516.90 L157.71,516.88 L158.05,516.53 L158.39,516.10 L158.72,516.85 L159.06,516.74 L159.40,516.31 L159.74,515.98 L160.07,516.37 L160.41,516.56 L160.75,515.95 L161.09,516.93 L161.43,516.07 L161.76,516.67 L162.10,516.82 L162.44,516.85 L162.78,516.65 L163.11,516.12 L163.45,516.79 L163.79,516.36 L164.12,516.30 L164.46,516.58 L164.80,516.40 L165.14,516.91 L165.47,516.91 L165.81,516.76 L166.15,516.26 L166.49,516.53 L166.82,516.65 L167.16,516.36 L167.50,516.50 L167.84,516.66 L168.18,516.14 L168.51,516.24 L168.85,516.72 L169.19,516.37 L169.53,516.42 L169.86,516.05 L170.20,516.21 L170.54,516.67 L170.88,515.94 L171.21,516.85 L171.55,516.54 L171.89,516.18 L172.22,516.82 L172.56,516.46 L172.90,516.94 L173.24,516.27 L173.57,516.17 L173.91,516.37 L174.25,516.05 L174.59,516.65 L174.93,516.24 L175.26,516.35 L175.60,516.36 L175.94,516.50 L176.28,516.09 L176.61,515.98 L176.95,516.48 L177.29,516.28 L177.62,516.91 L177.96,516.24 L178.30,516.29 L178.64,515.93 L178.97,516.11 L179.31,516.68 L179.65,516.57 L179.99,516.27 L180.32,516.95 L180.66,516.49 L181.00,516.80 L181.34,516.85 L181.68,516.91 L182.01,516.17 L182.35,516.84 L182.69,516.72 L183.03,516.56 L183.36,516.06 L183.70,516.89 L184.04,516.50 L184.38,516.40 L184.71,516.04 L185.05,516.11 L185.39,516.06 L185.72,516.68 L186.06,516.54 L186.40,516.60 L186.74,516.04 L187.07,515.97 L187.41,516.82 L187.75,516.79 L188.09,516.73 L188.43,516.73 L188.76,516.47 L189.10,516.36 L189.44,516.70 L189.78,516.97 L190.11,516.53 L190.45,516.59 L190.79,516.38 L191.12,515.97 L191.46,516.25 L191.80,516.43 L192.14,516.32 L192.47,516.26 L192.81,516.92 L193.15,516.03 L193.49,516.15 L193.82,516.05 L194.16,516.13 L194.50,516.56 L194.84,516.56 L195.18,516.87 L195.51,516.31 L195.85,516.91 L196.19,516.91 L196.53,516.76 L196.86,516.81 L197.20,516.62 L197.54,516.92 L197.88,516.98 L198.21,516.82 L198.55,516.87 L198.89,516.59 L199.22,516.95 L199.56,516.05 L199.90,516.33 L200.24,516.82 L200.57,516.71 L200.91,516.61 L201.25,516.59 L201.59,516.85 L201.93,516.08 L202.26,515.93 L202.60,516.49 L202.94,516.47 L203.28,516.89 L203.61,516.87 L203.95,516.62 L204.29,516.70 L204.62,516.10 L204.96,516.81 L205.30,516.95 L205.64,515.97 L205.97,516.42 L206.31,516.82 L206.65,516.40 L206.99,516.95 L207.32,516.42 L207.66,515.94 L208.00,516.07 L208.34,516.24 L208.68,516.70 L209.01,516.59 L209.35,516.80 L209.69,516.16 L210.03,516.41 L210.36,516.15 L210.70,516.63 L211.04,516.74 L211.38,516.12 L211.71,515.94 L212.05,516.08 L212.39,516.13 L212.72,516.11 L213.06,516.20 L213.40,516.74 L213.74,516.43 L214.07,516.60 L214.41,516.95 L214.75,516.95 L215.09,516.68 L215.43,516.70 L215.76,516.25 L216.10,515.97 L216.44,516.50 L216.78,515.99 L217.11,515.93 L217.45,515.97 L217.79,516.59 L218.12,516.74 L218.46,516.74 L218.80,516.77 L219.14,516.76 L219.48,516.32 L219.81,516.03 L220.15,516.09 L220.49,516.47 L220.82,516.29 L221.16,516.13 L221.50,516.89 L221.84,516.28 L222.18,516.02 L222.51,516.15 L222.85,516.19 L223.19,516.47 L223.53,516.79 L223.86,516.14 L224.20,516.63 L224.54,516.13 L224.88,515.95 L225.21,516.56 L225.55,516.55 L225.89,515.98 L226.23,516.21 L226.56,516.80 L226.90,516.84 L227.24,516.82 L227.57,516.02 L227.91,516.13 L228.25,516.82 L228.59,516.10 L228.93,515.94 L229.26,516.28 L229.60,516.61 L229.94,516.40 L230.28,516.84 L230.61,516.96 L230.95,515.95 L231.29,516.29 L231.62,516.42 L231.96,515.99 L232.30,516.52 L232.64,516.06 L232.98,516.10 L233.31,516.75 L233.65,516.71 L233.99,516.67 L234.32,516.72 L234.66,516.36 L235.00,516.70 L235.34,516.53 L235.68,516.84 L236.01,516.02 L236.35,516.60 L236.69,516.49 L237.03,516.36 L237.36,516.02 L237.70,516.53 L238.04,516.01 L238.38,516.45 L238.71,516.42 L239.05,516.42 L239.39,516.96 L239.73,516.51 L240.06,516.78 L240.40,516.97 L240.74,516.13 L241.07,516.80 L241.41,516.48 L241.75,516.21 L242.09,516.39 L242.43,516.63 L242.76,516.43 L243.10,516.39 L243.44,516.15 L243.78,516.87 L244.11,516.39 L244.45,516.71 L244.79,516.68 L245.12,516.16 L245.46,516.44 L245.80,516.38 L246.14,516.17 L246.48,516.01 L246.81,516.51 L247.15,516.33 L247.49,516.44 L247.82,516.44 L248.16,516.25 L248.50,516.50 L248.84,516.41 L249.18,516.47 L249.51,515.98 L249.85,516.24 L250.19,516.05 L250.53,515.98 L250.86,516.70 L251.20,516.39 L251.54,515.98 L251.88,516.09 L252.21,516.83 L252.55,516.85 L252.89,516.51 L253.23,516.90 L253.56,516.72 L253.90,516.90 L254.24,516.27 L254.57,516.15 L254.91,516.03 L255.25,516.81 L255.59,516.22 L255.93,516.28 L256.26,516.83 L256.60,516.04 L256.94,515.96 L257.27,516.75 L257.61,515.97 L257.95,516.56 L258.29,516.46 L258.62,515.93 L258.96,516.10 L259.30,516.81 L259.64,516.52 L259.98,516.43 L260.31,516.62 L260.65,516.77 L260.99,516.64 L261.32,516.21 L261.66,516.96 L262.00,516.39 L262.34,516.51 L262.68,516.96 L263.01,516.63 L263.35,516.32 L263.69,516.44 L264.02,516.91 L264.36,515.94 L264.70,516.14 L265.04,515.95 L265.38,516.87 L265.71,516.70 L266.05,516.94 L266.39,516.15 L266.73,516.69 L267.06,516.84 L267.40,516.53 L267.74,516.01 L268.07,516.11 L268.41,516.70 L268.75,516.82 L269.09,516.01 L269.43,516.37 L269.76,516.24 L270.10,516.88 L270.44,516.92 L270.77,516.25 L271.11,516.53 L271.45,516.90 L271.79,515.99 L272.12,516.31 L272.46,516.13 L272.80,516.89 L273.14,516.07 L273.48,516.91 L273.81,516.07 L274.15,516.50 L274.49,516.62 L274.82,516.39 L275.16,516.00 L275.50,516.69 L275.84,516.84 L276.18,516.42 L276.51,516.72 L276.85,516.86 L277.19,516.80 L277.52,516.91 L277.86,516.75 L278.20,516.63 L278.54,516.63 L278.88,516.15 L279.21,516.64 L279.55,516.41 L279.89,516.75 L280.23,516.56 L280.56,516.90 L280.90,516.65 L281.24,516.89 L281.57,516.12 L281.91,516.30 L282.25,516.68 L282.59,516.36 L282.93,515.87 L283.26,516.73 L283.60,515.97 L283.94,516.36 L284.27,516.28 L284.61,515.91 L284.95,516.36 L285.29,516.23 L285.62,516.02 L285.96,515.69 L286.30,516.34 L286.64,515.79 L286.98,515.88 L287.31,515.91 L287.65,516.09 L287.99,516.09 L288.33,516.33 L288.66,516.17 L289.00,516.02 L289.34,515.40 L289.68,515.60 L290.01,515.46 L290.35,515.27 L290.69,514.41 L291.02,514.08 L291.36,513.88 L291.70,513.81 L292.04,513.46 L292.38,513.03 L292.71,512.51 L293.05,512.33 L293.39,511.69 L293.73,511.35 L294.06,510.30 L294.40,509.73 L294.74,509.46 L295.08,509.06 L295.41,507.87 L295.75,507.69 L296.09,506.97 L296.43,506.53 L296.76,505.49 L297.10,504.64 L297.44,503.78 L297.77,503.12 L298.11,501.93 L298.45,501.27 L298.79,499.95 L299.12,498.80 L299.46,497.11 L299.80,495.78 L300.14,494.06 L300.48,492.00 L300.81,490.13 L301.15,487.88 L301.49,485.77 L301.83,483.21 L302.16,480.73 L302.50,478.03 L302.84,475.22 L303.18,472.95 L303.51,470.46 L303.85,467.58 L304.19,465.92 L304.52,463.23 L304.86,461.02 L305.20,459.11 L305.54,456.01 L305.88,453.41 L306.21,451.03 L306.55,448.22 L306.89,445.14 L307.23,442.20 L307.56,437.80 L307.90,432.86 L308.24,426.99 L308.58,420.92 L308.91,414.54 L309.25,407.68 L309.59,399.52 L309.93,391.34 L310.26,383.04 L310.60,375.61 L310.94,368.84 L311.27,362.33 L311.61,356.04 L311.95,350.29 L312.29,343.83 L312.62,338.02 L312.96,331.72 L313.30,325.46 L313.64,319.32 L313.98,313.35 L314.31,307.40 L314.65,300.11 L314.99,292.88 L315.33,285.06 L315.66,275.82 L316.00,265.20 L316.34,254.18 L316.68,241.61 L317.01,229.67 L317.35,217.63 L317.69,205.15 L318.02,191.97 L318.36,180.45 L318.70,169.41 L319.04,159.23 L319.38,150.16 L319.71,141.32 L320.05,132.68 L320.39,124.21 L320.73,116.32 L321.06,109.31 L321.40,102.89 L321.74,96.53 L322.08,90.84 L322.41,88.40 L322.75,90.92 L323.09,98.15 L323.43,106.20 L323.76,114.16 L324.10,122.12 L324.44,131.14 L324.77,141.75 L325.11,155.87 L325.45,172.82 L325.79,193.72 L326.12,214.91 L326.46,227.12 L326.80,236.62 L327.14,244.97 L327.48,252.33 L327.81,260.68 L328.15,267.29 L328.49,274.35 L328.83,282.33 L329.16,289.94 L329.50,298.12 L329.84,306.72 L330.18,315.83 L330.51,324.45 L330.85,332.96 L331.19,341.03 L331.52,350.14 L331.86,358.07 L332.20,366.03 L332.54,372.53 L332.88,378.29 L333.21,384.61 L333.55,389.41 L333.89,394.60 L334.23,398.92 L334.56,403.32 L334.90,407.55 L335.24,410.56 L335.58,414.17 L335.91,417.74 L336.25,421.03 L336.59,424.03 L336.93,427.47 L337.26,430.95 L337.60,434.33 L337.94,437.24 L338.27,440.06 L338.61,442.18 L338.95,445.17 L339.29,446.85 L339.62,448.92 L339.96,451.50 L340.30,452.84 L340.64,454.88 L340.98,456.54 L341.31,458.75 L341.65,460.39 L341.99,462.07 L342.33,463.28 L342.66,465.20 L343.00,466.88 L343.34,468.21 L343.68,469.53 L344.01,470.72 L344.35,471.63 L344.69,471.97 L345.02,473.20 L345.36,473.42 L345.70,474.51 L346.04,474.92 L346.38,475.07 L346.71,475.62 L347.05,475.75 L347.39,475.53 L347.73,475.74 L348.06,475.86 L348.40,475.92 L348.74,475.41 L349.08,474.93 L349.41,474.68 L349.75,473.98 L350.09,473.95 L350.43,472.95 L350.76,472.66 L351.10,471.91 L351.44,471.42 L351.77,471.05 L352.11,470.49 L352.45,468.93 L352.79,468.40 L353.12,466.82 L353.46,465.46 L353.80,463.94 L354.14,462.00 L354.48,460.23 L354.81,459.19 L355.15,457.25 L355.49,455.80 L355.83,453.83 L356.16,452.13 L356.50,450.45 L356.84,448.59 L357.18,446.69 L357.51,444.30 L357.85,442.76 L358.19,441.16 L358.52,438.87 L358.86,437.02 L359.20,435.66 L359.54,434.12 L359.88,432.31 L360.21,430.56 L360.55,428.57 L360.89,426.98 L361.23,425.10 L361.56,423.34 L361.90,421.37 L362.24,419.42 L362.58,417.81 L362.91,416.37 L363.25,414.68 L363.59,412.94 L363.93,411.43 L364.26,409.87 L364.60,408.53 L364.94,406.87 L365.27,404.88 L365.61,404.09 L365.95,402.40 L366.29,400.92 L366.62,399.38 L366.96,398.35 L367.30,396.81 L367.64,395.34 L367.98,393.75 L368.31,392.25 L368.65,390.42 L368.99,389.06 L369.33,387.63 L369.66,386.87 L370.00,385.49 L370.34,383.62 L370.68,382.14 L371.01,381.14 L371.35,379.76 L371.69,378.93 L372.02,377.38 L372.36,375.76 L372.70,374.64 L373.04,373.44 L373.38,372.21 L373.71,371.64 L374.05,370.66 L374.39,369.57 L374.73,368.27 L375.06,367.15 L375.40,365.99 L375.74,365.23 L376.08,364.39 L376.41,363.43 L376.75,362.84 L377.09,362.70 L377.43,361.65 L377.76,360.31 L378.10,360.40 L378.44,358.98 L378.77,359.16 L379.11,357.96 L379.45,357.63 L379.79,356.81 L380.12,356.80 L380.46,355.39 L380.80,355.12 L381.14,355.76 L381.48,354.36 L381.81,355.08 L382.15,354.57 L382.49,354.51 L382.83,353.98 L383.16,354.50 L383.50,354.20 L383.84,353.55 L384.18,353.25 L384.51,353.57 L384.85,352.76 L385.19,352.87 L385.52,353.67 L385.86,353.47 L386.20,353.07 L386.54,353.40 L386.88,352.65 L387.21,353.37 L387.55,353.20 L387.89,353.25 L388.23,353.31 L388.56,352.00 L388.90,352.21 L389.24,351.87 L389.58,352.97 L389.91,352.10 L390.25,352.21 L390.59,352.63 L390.93,352.94 L391.26,352.77 L391.60,351.76 L391.94,351.76 L392.27,352.70 L392.61,352.02 L392.95,353.22 L393.29,352.77 L393.62,353.09 L393.96,352.08 L394.30,352.87 L394.64,352.40 L394.98,353.58 L395.31,352.32 L395.65,352.67 L395.99,353.37 L396.33,352.54 L396.66,353.69 L397.00,353.72 L397.34,354.32 L397.68,353.06 L398.01,353.16 L398.35,354.37 L398.69,353.42 L399.02,354.43 L399.36,354.53 L399.70,353.94 L400.04,354.31 L400.38,354.46 L400.71,354.97 L401.05,355.60 L401.39,355.10 L401.73,356.20 L402.06,356.34 L402.40,356.88 L402.74,356.67 L403.08,356.07 L403.41,357.25 L403.75,357.75 L404.09,357.09 L404.43,358.07 L404.76,357.76 L405.10,357.85 L405.44,358.26 L405.77,358.29 L406.11,359.01 L406.45,359.06 L406.79,360.12 L407.12,360.58 L407.46,360.27 L407.80,360.89 L408.14,361.07 L408.48,360.97 L408.81,361.05 L409.15,362.20 L409.49,362.02 L409.83,363.61 L410.16,363.89 L410.50,363.94 L410.84,363.76 L411.18,364.46 L411.51,364.62 L411.85,365.47 L412.19,365.53 L412.53,366.29 L412.86,366.88 L413.20,366.95 L413.54,367.28 L413.88,368.39 L414.21,368.49 L414.55,368.96 L414.89,369.76 L415.23,370.14 L415.56,370.82 L415.90,371.28 L416.24,371.76 L416.58,372.03 L416.91,372.53 L417.25,373.40 L417.59,374.10 L417.93,374.41 L418.26,374.71 L418.60,375.65 L418.94,376.12 L419.28,376.79 L419.61,376.93 L419.95,377.71 L420.29,378.67 L420.62,379.25 L420.96,379.64 L421.30,380.14 L421.64,380.69 L421.98,381.74 L422.31,382.32 L422.65,382.56 L422.99,383.42 L423.33,384.17 L423.66,384.81 L424.00,384.99 L424.34,386.07 L424.68,386.65 L425.01,387.41 L425.35,388.07 L425.69,388.59 L426.03,389.24 L426.36,390.18 L426.70,390.95 L427.04,391.46 L427.38,392.37 L427.71,393.16 L428.05,393.55 L428.39,394.45 L428.73,395.04 L429.06,395.93 L429.40,396.49 L429.74,397.39 L430.08,398.25 L430.41,399.06 L430.75,399.61 L431.09,400.33 L431.43,400.99 L431.76,402.07 L432.10,402.63 L432.44,403.50 L432.78,404.22 L433.11,405.13 L433.45,405.86 L433.79,406.55 L434.12,407.18 L434.46,408.27 L434.80,408.91 L435.14,409.58 L435.48,410.31 L435.81,411.39 L436.15,412.21 L436.49,412.70 L436.83,413.49 L437.16,414.47 L437.50,415.43 L437.84,415.90 L438.18,416.90 L438.51,417.51 L438.85,418.42 L439.19,419.14 L439.53,420.20 L439.86,420.76 L440.20,421.78 L440.54,422.51 L440.88,423.15 L441.21,423.96 L441.55,425.00 L441.89,425.79 L442.23,426.52 L442.56,427.27 L442.90,428.12 L443.24,429.02 L443.58,429.77 L443.91,430.38 L444.25,431.11 L444.59,432.23 L444.93,432.82 L445.26,433.54 L445.60,434.60 L445.94,435.08 L446.28,436.14 L446.61,436.73 L446.95,437.53 L447.29,438.28 L447.62,439.18 L447.96,439.90 L448.30,440.61 L448.64,441.44 L448.98,442.11 L449.31,442.95 L449.65,443.71 L449.99,444.63 L450.33,445.15 L450.66,445.95 L451.00,446.79 L451.34,447.33 L451.68,448.07 L452.01,448.92 L452.35,449.76 L452.69,450.37 L453.03,451.24 L453.36,451.95 L453.70,452.55 L454.04,453.39 L454.38,453.96 L454.71,454.64 L455.05,455.52 L455.39,455.99 L455.73,456.89 L456.06,457.33 L456.40,457.99 L456.74,458.77 L457.08,459.62 L457.41,460.12 L457.75,460.83 L458.09,461.27 L458.43,462.24 L458.76,462.61 L459.10,463.21 L459.44,463.95 L459.78,464.55 L460.11,465.42 L460.45,465.75 L460.79,466.55 L461.12,466.99 L461.46,467.62 L461.80,468.51 L462.14,468.88 L462.48,469.42 L462.81,470.34 L463.15,470.82 L463.49,471.25 L463.83,472.05 L464.16,472.34 L464.50,473.14 L464.84,473.50 L465.18,474.31 L465.51,474.72 L465.85,475.11 L466.19,475.92 L466.53,476.44 L466.86,476.88 L467.20,477.47 L467.54,478.10 L467.88,478.56 L468.21,479.08 L468.55,479.29 L468.89,479.89 L469.23,480.30 L469.56,481.07 L469.90,481.32 L470.24,482.05 L470.58,482.37 L470.91,482.80 L471.25,483.37 L471.59,483.64 L471.93,484.21 L472.26,484.65 L472.60,484.98 L472.94,485.72 L473.28,485.82 L473.61,486.39 L473.95,486.90 L474.29,487.17 L474.62,487.79 L474.96,487.93 L475.30,488.49 L475.64,488.97 L475.98,489.22 L476.31,489.73 L476.65,490.22 L476.99,490.39 L477.33,491.03 L477.66,491.12 L478.00,491.70 L478.34,491.92 L478.68,492.16 L479.01,492.66 L479.35,492.99 L479.69,493.47 L480.03,493.93 L480.36,494.26 L480.70,494.55 L481.04,494.70 L481.38,495.10 L481.71,495.40 L482.05,495.57 L482.39,496.17 L482.73,496.45 L483.06,496.60 L483.40,497.14 L483.74,497.44 L484.08,497.61 L484.41,497.99 L484.75,498.19 L485.09,498.52 L485.43,498.67 L485.76,498.94 L486.10,499.36 L486.44,499.47 L486.78,499.79 L487.11,500.18 L487.45,500.14 L487.79,500.66 L488.12,500.94 L488.46,501.21 L488.80,501.25 L489.14,501.41 L489.48,501.68 L489.81,502.06 L490.15,502.34 L490.49,502.67 L490.83,502.66 L491.16,502.91 L491.50,503.21 L491.84,503.31 L492.18,503.60 L492.51,503.63 L492.85,503.91 L493.19,504.30 L493.53,504.26 L493.86,504.78 L494.20,504.79 L494.54,505.03 L494.88,505.29 L495.21,505.54 L495.55,505.46 L495.89,505.93 L496.23,505.90 L496.56,505.93 L496.90,506.41 L497.24,506.56 L497.58,506.58 L497.91,506.78 L498.25,506.90 L498.59,506.99 L498.93,507.39 L499.26,507.50 L499.60,507.66 L499.94,507.91 L500.28,507.74 L500.61,507.93 L500.95,508.10 L501.29,508.51 L501.62,508.34 L501.96,508.52 L502.30,508.76 L502.64,508.79 L502.98,509.03 L503.31,509.25 L503.65,509.43 L503.99,509.51 L504.33,509.71 L504.66,509.72 L505.00,509.68 L505.34,509.82 L505.68,509.88 L506.01,510.05 L506.35,510.33 L506.69,510.34 L507.03,510.49 L507.36,510.47 L507.70,510.68 L508.04,510.88 L508.38,510.84 L508.71,510.82 L509.05,511.21 L509.39,511.06 L509.73,511.48 L510.06,511.48 L510.40,511.59 L510.74,511.49 L511.08,511.50 L511.41,511.67 L511.75,511.92 L512.09,511.79 L512.42,512.09 L512.76,512.21 L513.10,512.04 L513.44,512.22 L513.78,512.28 L514.11,512.37 L514.45,512.33 L514.79,512.60 L515.12,512.53 L515.46,512.66 L515.80,512.67 L516.14,512.90 L516.48,512.87 L516.81,512.99 L517.15,513.16 L517.49,513.26 L517.83,513.17 L518.16,513.44 L518.50,513.19 L518.84,513.55 L519.17,513.65 L519.51,513.68 L519.85,513.43 L520.19,513.71 L520.53,513.84 L520.86,513.94 L521.20,513.99 L521.54,513.80 L521.88,513.88 L522.21,513.91 L522.55,513.94 L522.89,514.25 L523.23,514.10 L523.56,514.23 L523.90,514.11 L524.24,514.16 L524.58,514.17 L524.91,514.53 L525.25,514.27 L525.59,514.30 L525.92,514.33 L526.26,514.69 L526.60,514.69 L526.94,514.77 L527.28,514.84 L527.61,514.57 L527.95,514.62 L528.29,514.73 L528.62,514.70 L528.96,514.80 L529.30,514.97 L529.64,515.08 L529.98,515.11 L530.31,514.90 L530.65,515.14 L530.99,515.13 L531.33,515.12 L531.66,515.30 L532.00,515.25 L532.34,515.27 L532.67,515.13 L533.01,515.29 L533.35,515.34 L533.69,515.13 L534.03,515.33 L534.36,515.22 L534.70,515.34 L535.04,515.58 L535.38,515.47 L535.71,515.48 L536.05,515.38 L536.39,515.56 L536.73,515.45 L537.06,515.54 L537.40,515.68 L537.74,515.46 L538.08,515.77 L538.41,515.52 L538.75,515.79 L539.09,515.87 L539.42,515.82 L539.76,515.62 L540.10,515.56 L540.44,515.95 L540.78,515.78 L541.11,515.80 L541.45,515.70 L541.79,515.95 L542.12,515.85 L542.46,515.92 L542.80,515.76 L543.14,515.99 L543.48,515.75 L543.81,516.01 L544.15,516.05 L544.49,515.89 L544.83,515.98 L545.16,516.14 L545.50,515.95 L545.84,516.17 L546.17,515.92 L546.51,515.97 L546.85,515.95 L547.19,516.02 L547.53,516.13 L547.86,516.13 L548.20,516.14 L548.54,515.97 L548.88,516.28 L549.21,515.99 L549.55,516.33 L549.89,516.27 L550.23,516.26 L550.56,516.03 L550.90,516.19 L551.24,516.24 L551.58,516.06 L551.91,516.32 L552.25,516.24 L552.59,516.22 L552.92,516.15 L553.26,516.16 L553.60,516.21 L553.94,516.33 L554.28,516.34 L554.61,516.41 L554.95,516.16 L555.29,516.24 L555.62,516.22 L555.96,516.44 L556.30,516.34 L556.64,516.22 L556.98,516.30 L557.31,516.48 L557.65,516.36 L557.99,516.21 L558.33,516.46 L558.66,516.48 L559.00,516.45 L559.34,516.16 L559.67,516.02 L560.01,516.75 L560.35,516.76 L560.69,516.66 L561.03,516.59 L561.36,516.38 L561.70,516.77 L562.04,516.60 L562.38,516.75 L562.71,515.92 L563.05,516.19 L563.39,516.86 L563.73,515.95 L564.06,516.86 L564.40,516.57 L564.74,515.94 L565.08,516.14 L565.41,516.21 L565.75,516.53 L566.09,516.79 L566.42,516.32 L566.76,516.89 L567.10,516.79 L567.44,516.60 L567.78,516.97 L568.11,516.59 L568.45,516.18 L568.79,516.29 L569.12,516.49 L569.46,516.36 L569.80,516.54 L570.14,516.88 L570.48,516.40 L570.81,516.61 L571.15,516.26 L571.49,516.08 L571.83,516.59 L572.16,516.44 L572.50,516.26 L572.84,516.60 L573.17,516.81 L573.51,516.29 L573.85,516.13 L574.19,516.24 L574.53,516.32 L574.86,516.16 L575.20,516.34 L575.54,516.39 L575.88,516.59 L576.21,516.74 L576.55,516.41 L576.89,516.97 L577.23,516.63 L577.56,516.25 L577.90,516.32 L578.24,516.41 L578.58,516.81 L578.91,516.63 L579.25,516.60 L579.59,516.43 L579.92,516.65 L580.26,516.37 L580.60,516.10 L580.94,516.89 L581.28,516.40 L581.61,516.27 L581.95,516.68 L582.29,516.57 L582.62,516.06 L582.96,516.98 L583.30,516.52 L583.64,516.93 L583.98,516.27 L584.31,516.10 L584.65,516.55 L584.99,516.98 L585.33,516.49 L585.66,516.53 L586.00,516.34 L586.34,516.56 L586.67,516.43 L587.01,516.23 L587.35,516.55 L587.69,516.67 L588.03,516.10 L588.36,516.88 L588.70,516.38 L589.04,516.69 L589.38,516.30 L589.71,516.98 L590.05,516.07 L590.39,516.73 L590.73,516.98 L591.06,516.82 L591.40,516.69 L591.74,516.98 L592.08,516.67 L592.41,516.67 L592.75,516.38 L593.09,516.74 L593.42,516.83 L593.76,516.88 L594.10,516.33 L594.44,516.12 L594.78,516.56 L595.11,516.88 L595.45,516.27 L595.79,516.70 L596.12,516.89 L596.46,516.98 L596.80,516.30 L597.14,516.26 L597.48,516.45 L597.81,516.62 L598.15,516.53 L598.49,516.88 L598.83,516.10 L599.16,516.75 L599.50,516.45 L599.84,516.26 L600.17,516.26 L600.51,516.63 L600.85,516.81 L601.19,516.54 L601.53,516.98 L601.86,516.24 L602.20,516.75 L602.54,516.22 L602.88,516.84 L603.21,516.72 L603.55,516.85 L603.89,516.67 L604.23,516.93 L604.56,516.98 L604.90,516.36 L605.24,516.83 L605.58,516.86 L605.91,516.80 L606.25,516.62 L606.59,516.67 L606.92,516.45 L607.26,516.43 L607.60,516.74 L607.94,516.14 L608.28,516.22 L608.61,516.98 L608.95,516.25 L609.29,516.17 L609.62,516.30 L609.96,516.98 L610.30,516.25 L610.64,516.46 L610.98,516.98 L611.31,516.98 L611.65,516.12 L611.99,516.43 L612.33,516.86 L612.66,516.98 L613.00,516.97 L613.34,516.88 L613.67,516.31 L614.01,516.76 L614.35,516.96 L614.69,516.17 L615.03,516.29 L615.36,516.95 L615.70,516.19 L616.04,516.48 L616.38,516.30 L616.71,516.42 L617.05,516.18 L617.39,516.29 L617.73,516.24 L618.06,516.92 L618.40,516.40 L618.74,516.57 L619.08,516.34 L619.41,516.66 L619.75,516.19 L620.09,516.54 L620.42,516.85 L620.76,516.88 L621.10,516.98 L621.44,516.61 L621.78,516.98 L622.11,516.63 L622.45,516.97 L622.79,516.61 L623.12,516.60 L623.46,516.56 L623.80,516.22 L624.14,516.98 L624.48,516.24 L624.81,516.63 L625.15,516.53 L625.49,516.42 L625.83,516.24 L626.16,516.73 L626.50,516.69 L626.84,516.11 L627.17,516.98 L627.51,516.45 L627.85,516.46 L628.19,516.98 L628.53,516.48 L628.86,516.41 L629.20,516.14 L629.54,516.78 L629.88,516.09 L630.21,516.59 L630.55,516.62 L630.89,516.18 L631.23,516.98 L631.56,516.37 L631.90,516.47 L632.24,516.77 L632.58,516.22 L632.91,516.74 L633.25,516.63 L633.59,516.57 L633.92,516.31 L634.26,516.91 L634.60,516.67 L634.94,516.68 L635.28,516.54 L635.61,516.25 L635.95,516.82 L636.29,516.25 L636.62,516.70 L636.96,516.60 L637.30,516.84 L637.64,516.59 L637.98,516.10 L638.31,516.44 L638.65,516.29 L638.99,516.78 L639.33,516.79 L639.66,516.81 L640.00,516.51 L640.34,516.46 L640.67,516.30 L641.01,516.98 L641.35,516.36 L641.69,516.19 L642.03,516.55 L642.36,516.98 L642.70,516.81 L643.04,516.98 L643.38,516.93 L643.71,516.15 L644.05,516.49 L644.39,516.43 L644.73,516.29 L645.06,516.17 L645.40,516.48 L645.74,516.48 L646.08,516.47 L646.41,516.39 L646.75,516.50 L647.09,516.41 L647.42,516.90 L647.76,516.42 L648.10,516.64 L648.44,516.32 L648.78,516.98 L649.11,516.94 L649.45,516.98 L649.79,516.31 L650.12,516.16 L650.46,516.44 L650.80,516.74 L651.14,516.26 L651.48,516.30 L651.81,516.53 L652.15,516.86 L652.49,516.81 L652.83,516.68 L653.16,516.79 L653.50,516.67 L653.84,516.45 L654.17,516.14 L654.51,516.98 L654.85,516.53 L655.19,516.98 L655.53,516.98 L655.86,516.27 L656.20,516.52 L656.54,516.16 L656.88,516.66 L657.21,516.98 L657.55,516.72 L657.89,516.50 L658.23,516.14 L658.56,516.09 L658.90,516.63 L659.24,516.69 L659.58,516.98 L659.91,516.45 L660.25,516.90 L660.59,516.97 L660.92,516.98 L661.26,516.98 L661.60,516.41 L661.94,516.98 L662.28,516.11 L662.61,516.98 L662.95,516.21 L663.29,516.98 L663.62,516.98 L663.96,516.37 L664.30,516.87 L664.64,516.35 L664.98,516.93 L665.31,516.98 L665.65,516.31 L665.99,516.37 L666.33,516.22 L666.66,516.36 L667.00,516.98 L667.34,516.46 L667.68,516.38 L668.01,516.64 L668.35,516.14 L668.69,516.86 L669.02,516.11 L669.36,516.37 L669.70,516.98 L670.04,516.98 L670.38,516.44 L670.71,516.26 L671.05,516.98 L671.39,516.80 L671.73,516.36 L672.06,516.95 L672.40,516.22 L672.74,516.61 L673.08,516.98 L673.41,516.74 L673.75,516.52 L674.09,516.66 L674.43,516.41 L674.76,516.97 L675.10,516.29 L675.44,516.74 L675.78,516.45 L676.11,516.46 L676.45,516.69 L676.79,516.72 L677.12,516.30 L677.46,516.13 L677.80,516.30 L678.14,516.53 L678.48,516.82 L678.81,516.98 L679.15,516.10 L679.49,516.39 L679.83,516.25 L680.16,516.78 L680.50,516.49 L680.84,516.10 L681.18,516.25 L681.51,516.49 L681.85,516.80 L682.19,516.68 L682.53,516.19 L682.86,516.73 L683.20,516.40 L683.54,516.49 L683.88,516.18 L684.21,516.28 L684.55,516.83 L684.89,516.98 L685.23,516.85 L685.56,516.68 L685.90,516.51 L686.24,516.27 L686.58,516.19 L686.91,516.98 L687.25,516.25 L687.59,516.27 L687.93,516.21 L688.26,516.52 L688.60,516.84 L688.94,516.23 L689.28,516.28 L689.61,516.41 L689.95,516.16 L690.29,516.76 L690.62,516.98 L690.96,516.54 L691.30,516.29 L691.64,516.92 L691.98,516.34 L692.31,516.14 L692.65,516.88 L692.99,516.49 L693.33,516.41 L693.66,516.64 L694.00,516.91 L694.34,516.86 L694.68,516.33 L695.01,516.29 L695.35,516.64 L695.69,516.98 L696.03,516.28 L696.36,516.31 L696.70,516.88 L697.04,516.52 L697.38,516.18 L697.71,516.19 L698.05,516.58 L698.39,516.62 L698.73,516.51 L699.06,516.93 L699.40,516.92 L699.74,516.94 L700.08,516.39 L700.41,516.74 L700.75,516.53 L701.09,516.70 L701.43,516.58 L701.76,516.97 L702.10,516.98 L702.44,516.08 L702.78,516.73 L703.11,516.98 L703.45,516.46 L703.79,516.30 L704.12,516.96 L704.46,516.50 L704.80,516.76 L705.14,516.58 L705.48,516.98 L705.81,516.98 L706.15,516.08 L706.49,516.21 L706.83,516.61 L707.16,516.53 L707.50,516.85 L707.84,516.31 L708.18,516.68 L708.51,516.13 L708.85,516.32 L709.19,516.26 L709.53,516.11 L709.86,516.86 L710.20,516.98 L710.54,516.92 L710.88,516.94 L711.21,516.98 L711.55,516.98 L711.89,516.54 L712.23,516.21 L712.56,516.64 L712.90,516.13 L713.24,516.17 L713.58,516.98 L713.91,516.50 L714.25,516.71 L714.59,516.98 L714.93,516.12 L715.26,516.86 L715.60,516.53 L715.94,516.45 L716.28,516.12 L716.61,516.42 L716.95,516.71 L717.29,516.65 L717.62,516.96 L717.96,516.11 L718.30,516.08 L718.64,516.89 L718.98,516.98 L719.31,516.86 L719.65,516.76 L719.99,516.17 L720.33,516.17 L720.66,516.24 L721.00,516.98 L721.34,516.30 L721.68,516.38 L722.01,516.45 L722.35,516.09 L722.69,516.98 L723.03,516.98 L723.36,516.33 L723.70,516.14 L724.04,516.41 L724.38,516.81 L724.71,516.50 L725.05,516.33 L725.39,516.98 L725.73,516.79 L726.06,516.86 L726.40,516.98 L726.74,516.62 L727.08,516.95 L727.41,516.88 L727.75,516.98 L727.75,516.60 Z" fill="url(#sp)"/><path d="M154.00,516.64 L154.34,516.82 L154.68,516.29 L155.01,516.90 L155.35,516.41 L155.69,516.59 L156.03,516.92 L156.36,516.44 L156.70,516.94 L157.04,516.52 L157.38,516.90 L157.71,516.88 L158.05,516.53 L158.39,516.10 L158.72,516.85 L159.06,516.74 L159.40,516.31 L159.74,515.98 L160.07,516.37 L160.41,516.56 L160.75,515.95 L161.09,516.93 L161.43,516.07 L161.76,516.67 L162.10,516.82 L162.44,516.85 L162.78,516.65 L163.11,516.12 L163.45,516.79 L163.79,516.36 L164.12,516.30 L164.46,516.58 L164.80,516.40 L165.14,516.91 L165.47,516.91 L165.81,516.76 L166.15,516.26 L166.49,516.53 L166.82,516.65 L167.16,516.36 L167.50,516.50 L167.84,516.66 L168.18,516.14 L168.51,516.24 L168.85,516.72 L169.19,516.37 L169.53,516.42 L169.86,516.05 L170.20,516.21 L170.54,516.67 L170.88,515.94 L171.21,516.85 L171.55,516.54 L171.89,516.18 L172.22,516.82 L172.56,516.46 L172.90,516.94 L173.24,516.27 L173.57,516.17 L173.91,516.37 L174.25,516.05 L174.59,516.65 L174.93,516.24 L175.26,516.35 L175.60,516.36 L175.94,516.50 L176.28,516.09 L176.61,515.98 L176.95,516.48 L177.29,516.28 L177.62,516.91 L177.96,516.24 L178.30,516.29 L178.64,515.93 L178.97,516.11 L179.31,516.68 L179.65,516.57 L179.99,516.27 L180.32,516.95 L180.66,516.49 L181.00,516.80 L181.34,516.85 L181.68,516.91 L182.01,516.17 L182.35,516.84 L182.69,516.72 L183.03,516.56 L183.36,516.06 L183.70,516.89 L184.04,516.50 L184.38,516.40 L184.71,516.04 L185.05,516.11 L185.39,516.06 L185.72,516.68 L186.06,516.54 L186.40,516.60 L186.74,516.04 L187.07,515.97 L187.41,516.82 L187.75,516.79 L188.09,516.73 L188.43,516.73 L188.76,516.47 L189.10,516.36 L189.44,516.70 L189.78,516.97 L190.11,516.53 L190.45,516.59 L190.79,516.38 L191.12,515.97 L191.46,516.25 L191.80,516.43 L192.14,516.32 L192.47,516.26 L192.81,516.92 L193.15,516.03 L193.49,516.15 L193.82,516.05 L194.16,516.13 L194.50,516.56 L194.84,516.56 L195.18,516.87 L195.51,516.31 L195.85,516.91 L196.19,516.91 L196.53,516.76 L196.86,516.81 L197.20,516.62 L197.54,516.92 L197.88,516.98 L198.21,516.82 L198.55,516.87 L198.89,516.59 L199.22,516.95 L199.56,516.05 L199.90,516.33 L200.24,516.82 L200.57,516.71 L200.91,516.61 L201.25,516.59 L201.59,516.85 L201.93,516.08 L202.26,515.93 L202.60,516.49 L202.94,516.47 L203.28,516.89 L203.61,516.87 L203.95,516.62 L204.29,516.70 L204.62,516.10 L204.96,516.81 L205.30,516.95 L205.64,515.97 L205.97,516.42 L206.31,516.82 L206.65,516.40 L206.99,516.95 L207.32,516.42 L207.66,515.94 L208.00,516.07 L208.34,516.24 L208.68,516.70 L209.01,516.59 L209.35,516.80 L209.69,516.16 L210.03,516.41 L210.36,516.15 L210.70,516.63 L211.04,516.74 L211.38,516.12 L211.71,515.94 L212.05,516.08 L212.39,516.13 L212.72,516.11 L213.06,516.20 L213.40,516.74 L213.74,516.43 L214.07,516.60 L214.41,516.95 L214.75,516.95 L215.09,516.68 L215.43,516.70 L215.76,516.25 L216.10,515.97 L216.44,516.50 L216.78,515.99 L217.11,515.93 L217.45,515.97 L217.79,516.59 L218.12,516.74 L218.46,516.74 L218.80,516.77 L219.14,516.76 L219.48,516.32 L219.81,516.03 L220.15,516.09 L220.49,516.47 L220.82,516.29 L221.16,516.13 L221.50,516.89 L221.84,516.28 L222.18,516.02 L222.51,516.15 L222.85,516.19 L223.19,516.47 L223.53,516.79 L223.86,516.14 L224.20,516.63 L224.54,516.13 L224.88,515.95 L225.21,516.56 L225.55,516.55 L225.89,515.98 L226.23,516.21 L226.56,516.80 L226.90,516.84 L227.24,516.82 L227.57,516.02 L227.91,516.13 L228.25,516.82 L228.59,516.10 L228.93,515.94 L229.26,516.28 L229.60,516.61 L229.94,516.40 L230.28,516.84 L230.61,516.96 L230.95,515.95 L231.29,516.29 L231.62,516.42 L231.96,515.99 L232.30,516.52 L232.64,516.06 L232.98,516.10 L233.31,516.75 L233.65,516.71 L233.99,516.67 L234.32,516.72 L234.66,516.36 L235.00,516.70 L235.34,516.53 L235.68,516.84 L236.01,516.02 L236.35,516.60 L236.69,516.49 L237.03,516.36 L237.36,516.02 L237.70,516.53 L238.04,516.01 L238.38,516.45 L238.71,516.42 L239.05,516.42 L239.39,516.96 L239.73,516.51 L240.06,516.78 L240.40,516.97 L240.74,516.13 L241.07,516.80 L241.41,516.48 L241.75,516.21 L242.09,516.39 L242.43,516.63 L242.76,516.43 L243.10,516.39 L243.44,516.15 L243.78,516.87 L244.11,516.39 L244.45,516.71 L244.79,516.68 L245.12,516.16 L245.46,516.44 L245.80,516.38 L246.14,516.17 L246.48,516.01 L246.81,516.51 L247.15,516.33 L247.49,516.44 L247.82,516.44 L248.16,516.25 L248.50,516.50 L248.84,516.41 L249.18,516.47 L249.51,515.98 L249.85,516.24 L250.19,516.05 L250.53,515.98 L250.86,516.70 L251.20,516.39 L251.54,515.98 L251.88,516.09 L252.21,516.83 L252.55,516.85 L252.89,516.51 L253.23,516.90 L253.56,516.72 L253.90,516.90 L254.24,516.27 L254.57,516.15 L254.91,516.03 L255.25,516.81 L255.59,516.22 L255.93,516.28 L256.26,516.83 L256.60,516.04 L256.94,515.96 L257.27,516.75 L257.61,515.97 L257.95,516.56 L258.29,516.46 L258.62,515.93 L258.96,516.10 L259.30,516.81 L259.64,516.52 L259.98,516.43 L260.31,516.62 L260.65,516.77 L260.99,516.64 L261.32,516.21 L261.66,516.96 L262.00,516.39 L262.34,516.51 L262.68,516.96 L263.01,516.63 L263.35,516.32 L263.69,516.44 L264.02,516.91 L264.36,515.94 L264.70,516.14 L265.04,515.95 L265.38,516.87 L265.71,516.70 L266.05,516.94 L266.39,516.15 L266.73,516.69 L267.06,516.84 L267.40,516.53 L267.74,516.01 L268.07,516.11 L268.41,516.70 L268.75,516.82 L269.09,516.01 L269.43,516.37 L269.76,516.24 L270.10,516.88 L270.44,516.92 L270.77,516.25 L271.11,516.53 L271.45,516.90 L271.79,515.99 L272.12,516.31 L272.46,516.13 L272.80,516.89 L273.14,516.07 L273.48,516.91 L273.81,516.07 L274.15,516.50 L274.49,516.62 L274.82,516.39 L275.16,516.00 L275.50,516.69 L275.84,516.84 L276.18,516.42 L276.51,516.72 L276.85,516.86 L277.19,516.80 L277.52,516.91 L277.86,516.75 L278.20,516.63 L278.54,516.63 L278.88,516.15 L279.21,516.64 L279.55,516.41 L279.89,516.75 L280.23,516.56 L280.56,516.90 L280.90,516.65 L281.24,516.89 L281.57,516.12 L281.91,516.30 L282.25,516.68 L282.59,516.36 L282.93,515.87 L283.26,516.73 L283.60,515.97 L283.94,516.36 L284.27,516.28 L284.61,515.91 L284.95,516.36 L285.29,516.23 L285.62,516.02 L285.96,515.69 L286.30,516.34 L286.64,515.79 L286.98,515.88 L287.31,515.91 L287.65,516.09 L287.99,516.09 L288.33,516.33 L288.66,516.17 L289.00,516.02 L289.34,515.40 L289.68,515.60 L290.01,515.46 L290.35,515.27 L290.69,514.41 L291.02,514.08 L291.36,513.88 L291.70,513.81 L292.04,513.46 L292.38,513.03 L292.71,512.51 L293.05,512.33 L293.39,511.69 L293.73,511.35 L294.06,510.30 L294.40,509.73 L294.74,509.46 L295.08,509.06 L295.41,507.87 L295.75,507.69 L296.09,506.97 L296.43,506.53 L296.76,505.49 L297.10,504.64 L297.44,503.78 L297.77,503.12 L298.11,501.93 L298.45,501.27 L298.79,499.95 L299.12,498.80 L299.46,497.11 L299.80,495.78 L300.14,494.06 L300.48,492.00 L300.81,490.13 L301.15,487.88 L301.49,485.77 L301.83,483.21 L302.16,480.73 L302.50,478.03 L302.84,475.22 L303.18,472.95 L303.51,470.46 L303.85,467.58 L304.19,465.92 L304.52,463.23 L304.86,461.02 L305.20,459.11 L305.54,456.01 L305.88,453.41 L306.21,451.03 L306.55,448.22 L306.89,445.14 L307.23,442.20 L307.56,437.80 L307.90,432.86 L308.24,426.99 L308.58,420.92 L308.91,414.54 L309.25,407.68 L309.59,399.52 L309.93,391.34 L310.26,383.04 L310.60,375.61 L310.94,368.84 L311.27,362.33 L311.61,356.04 L311.95,350.29 L312.29,343.83 L312.62,338.02 L312.96,331.72 L313.30,325.46 L313.64,319.32 L313.98,313.35 L314.31,307.40 L314.65,300.11 L314.99,292.88 L315.33,285.06 L315.66,275.82 L316.00,265.20 L316.34,254.18 L316.68,241.61 L317.01,229.67 L317.35,217.63 L317.69,205.15 L318.02,191.97 L318.36,180.45 L318.70,169.41 L319.04,159.23 L319.38,150.16 L319.71,141.32 L320.05,132.68 L320.39,124.21 L320.73,116.32 L321.06,109.31 L321.40,102.89 L321.74,96.53 L322.08,90.84 L322.41,88.40 L322.75,90.92 L323.09,98.15 L323.43,106.20 L323.76,114.16 L324.10,122.12 L324.44,131.14 L324.77,141.75 L325.11,155.87 L325.45,172.82 L325.79,193.72 L326.12,214.91 L326.46,227.12 L326.80,236.62 L327.14,244.97 L327.48,252.33 L327.81,260.68 L328.15,267.29 L328.49,274.35 L328.83,282.33 L329.16,289.94 L329.50,298.12 L329.84,306.72 L330.18,315.83 L330.51,324.45 L330.85,332.96 L331.19,341.03 L331.52,350.14 L331.86,358.07 L332.20,366.03 L332.54,372.53 L332.88,378.29 L333.21,384.61 L333.55,389.41 L333.89,394.60 L334.23,398.92 L334.56,403.32 L334.90,407.55 L335.24,410.56 L335.58,414.17 L335.91,417.74 L336.25,421.03 L336.59,424.03 L336.93,427.47 L337.26,430.95 L337.60,434.33 L337.94,437.24 L338.27,440.06 L338.61,442.18 L338.95,445.17 L339.29,446.85 L339.62,448.92 L339.96,451.50 L340.30,452.84 L340.64,454.88 L340.98,456.54 L341.31,458.75 L341.65,460.39 L341.99,462.07 L342.33,463.28 L342.66,465.20 L343.00,466.88 L343.34,468.21 L343.68,469.53 L344.01,470.72 L344.35,471.63 L344.69,471.97 L345.02,473.20 L345.36,473.42 L345.70,474.51 L346.04,474.92 L346.38,475.07 L346.71,475.62 L347.05,475.75 L347.39,475.53 L347.73,475.74 L348.06,475.86 L348.40,475.92 L348.74,475.41 L349.08,474.93 L349.41,474.68 L349.75,473.98 L350.09,473.95 L350.43,472.95 L350.76,472.66 L351.10,471.91 L351.44,471.42 L351.77,471.05 L352.11,470.49 L352.45,468.93 L352.79,468.40 L353.12,466.82 L353.46,465.46 L353.80,463.94 L354.14,462.00 L354.48,460.23 L354.81,459.19 L355.15,457.25 L355.49,455.80 L355.83,453.83 L356.16,452.13 L356.50,450.45 L356.84,448.59 L357.18,446.69 L357.51,444.30 L357.85,442.76 L358.19,441.16 L358.52,438.87 L358.86,437.02 L359.20,435.66 L359.54,434.12 L359.88,432.31 L360.21,430.56 L360.55,428.57 L360.89,426.98 L361.23,425.10 L361.56,423.34 L361.90,421.37 L362.24,419.42 L362.58,417.81 L362.91,416.37 L363.25,414.68 L363.59,412.94 L363.93,411.43 L364.26,409.87 L364.60,408.53 L364.94,406.87 L365.27,404.88 L365.61,404.09 L365.95,402.40 L366.29,400.92 L366.62,399.38 L366.96,398.35 L367.30,396.81 L367.64,395.34 L367.98,393.75 L368.31,392.25 L368.65,390.42 L368.99,389.06 L369.33,387.63 L369.66,386.87 L370.00,385.49 L370.34,383.62 L370.68,382.14 L371.01,381.14 L371.35,379.76 L371.69,378.93 L372.02,377.38 L372.36,375.76 L372.70,374.64 L373.04,373.44 L373.38,372.21 L373.71,371.64 L374.05,370.66 L374.39,369.57 L374.73,368.27 L375.06,367.15 L375.40,365.99 L375.74,365.23 L376.08,364.39 L376.41,363.43 L376.75,362.84 L377.09,362.70 L377.43,361.65 L377.76,360.31 L378.10,360.40 L378.44,358.98 L378.77,359.16 L379.11,357.96 L379.45,357.63 L379.79,356.81 L380.12,356.80 L380.46,355.39 L380.80,355.12 L381.14,355.76 L381.48,354.36 L381.81,355.08 L382.15,354.57 L382.49,354.51 L382.83,353.98 L383.16,354.50 L383.50,354.20 L383.84,353.55 L384.18,353.25 L384.51,353.57 L384.85,352.76 L385.19,352.87 L385.52,353.67 L385.86,353.47 L386.20,353.07 L386.54,353.40 L386.88,352.65 L387.21,353.37 L387.55,353.20 L387.89,353.25 L388.23,353.31 L388.56,352.00 L388.90,352.21 L389.24,351.87 L389.58,352.97 L389.91,352.10 L390.25,352.21 L390.59,352.63 L390.93,352.94 L391.26,352.77 L391.60,351.76 L391.94,351.76 L392.27,352.70 L392.61,352.02 L392.95,353.22 L393.29,352.77 L393.62,353.09 L393.96,352.08 L394.30,352.87 L394.64,352.40 L394.98,353.58 L395.31,352.32 L395.65,352.67 L395.99,353.37 L396.33,352.54 L396.66,353.69 L397.00,353.72 L397.34,354.32 L397.68,353.06 L398.01,353.16 L398.35,354.37 L398.69,353.42 L399.02,354.43 L399.36,354.53 L399.70,353.94 L400.04,354.31 L400.38,354.46 L400.71,354.97 L401.05,355.60 L401.39,355.10 L401.73,356.20 L402.06,356.34 L402.40,356.88 L402.74,356.67 L403.08,356.07 L403.41,357.25 L403.75,357.75 L404.09,357.09 L404.43,358.07 L404.76,357.76 L405.10,357.85 L405.44,358.26 L405.77,358.29 L406.11,359.01 L406.45,359.06 L406.79,360.12 L407.12,360.58 L407.46,360.27 L407.80,360.89 L408.14,361.07 L408.48,360.97 L408.81,361.05 L409.15,362.20 L409.49,362.02 L409.83,363.61 L410.16,363.89 L410.50,363.94 L410.84,363.76 L411.18,364.46 L411.51,364.62 L411.85,365.47 L412.19,365.53 L412.53,366.29 L412.86,366.88 L413.20,366.95 L413.54,367.28 L413.88,368.39 L414.21,368.49 L414.55,368.96 L414.89,369.76 L415.23,370.14 L415.56,370.82 L415.90,371.28 L416.24,371.76 L416.58,372.03 L416.91,372.53 L417.25,373.40 L417.59,374.10 L417.93,374.41 L418.26,374.71 L418.60,375.65 L418.94,376.12 L419.28,376.79 L419.61,376.93 L419.95,377.71 L420.29,378.67 L420.62,379.25 L420.96,379.64 L421.30,380.14 L421.64,380.69 L421.98,381.74 L422.31,382.32 L422.65,382.56 L422.99,383.42 L423.33,384.17 L423.66,384.81 L424.00,384.99 L424.34,386.07 L424.68,386.65 L425.01,387.41 L425.35,388.07 L425.69,388.59 L426.03,389.24 L426.36,390.18 L426.70,390.95 L427.04,391.46 L427.38,392.37 L427.71,393.16 L428.05,393.55 L428.39,394.45 L428.73,395.04 L429.06,395.93 L429.40,396.49 L429.74,397.39 L430.08,398.25 L430.41,399.06 L430.75,399.61 L431.09,400.33 L431.43,400.99 L431.76,402.07 L432.10,402.63 L432.44,403.50 L432.78,404.22 L433.11,405.13 L433.45,405.86 L433.79,406.55 L434.12,407.18 L434.46,408.27 L434.80,408.91 L435.14,409.58 L435.48,410.31 L435.81,411.39 L436.15,412.21 L436.49,412.70 L436.83,413.49 L437.16,414.47 L437.50,415.43 L437.84,415.90 L438.18,416.90 L438.51,417.51 L438.85,418.42 L439.19,419.14 L439.53,420.20 L439.86,420.76 L440.20,421.78 L440.54,422.51 L440.88,423.15 L441.21,423.96 L441.55,425.00 L441.89,425.79 L442.23,426.52 L442.56,427.27 L442.90,428.12 L443.24,429.02 L443.58,429.77 L443.91,430.38 L444.25,431.11 L444.59,432.23 L444.93,432.82 L445.26,433.54 L445.60,434.60 L445.94,435.08 L446.28,436.14 L446.61,436.73 L446.95,437.53 L447.29,438.28 L447.62,439.18 L447.96,439.90 L448.30,440.61 L448.64,441.44 L448.98,442.11 L449.31,442.95 L449.65,443.71 L449.99,444.63 L450.33,445.15 L450.66,445.95 L451.00,446.79 L451.34,447.33 L451.68,448.07 L452.01,448.92 L452.35,449.76 L452.69,450.37 L453.03,451.24 L453.36,451.95 L453.70,452.55 L454.04,453.39 L454.38,453.96 L454.71,454.64 L455.05,455.52 L455.39,455.99 L455.73,456.89 L456.06,457.33 L456.40,457.99 L456.74,458.77 L457.08,459.62 L457.41,460.12 L457.75,460.83 L458.09,461.27 L458.43,462.24 L458.76,462.61 L459.10,463.21 L459.44,463.95 L459.78,464.55 L460.11,465.42 L460.45,465.75 L460.79,466.55 L461.12,466.99 L461.46,467.62 L461.80,468.51 L462.14,468.88 L462.48,469.42 L462.81,470.34 L463.15,470.82 L463.49,471.25 L463.83,472.05 L464.16,472.34 L464.50,473.14 L464.84,473.50 L465.18,474.31 L465.51,474.72 L465.85,475.11 L466.19,475.92 L466.53,476.44 L466.86,476.88 L467.20,477.47 L467.54,478.10 L467.88,478.56 L468.21,479.08 L468.55,479.29 L468.89,479.89 L469.23,480.30 L469.56,481.07 L469.90,481.32 L470.24,482.05 L470.58,482.37 L470.91,482.80 L471.25,483.37 L471.59,483.64 L471.93,484.21 L472.26,484.65 L472.60,484.98 L472.94,485.72 L473.28,485.82 L473.61,486.39 L473.95,486.90 L474.29,487.17 L474.62,487.79 L474.96,487.93 L475.30,488.49 L475.64,488.97 L475.98,489.22 L476.31,489.73 L476.65,490.22 L476.99,490.39 L477.33,491.03 L477.66,491.12 L478.00,491.70 L478.34,491.92 L478.68,492.16 L479.01,492.66 L479.35,492.99 L479.69,493.47 L480.03,493.93 L480.36,494.26 L480.70,494.55 L481.04,494.70 L481.38,495.10 L481.71,495.40 L482.05,495.57 L482.39,496.17 L482.73,496.45 L483.06,496.60 L483.40,497.14 L483.74,497.44 L484.08,497.61 L484.41,497.99 L484.75,498.19 L485.09,498.52 L485.43,498.67 L485.76,498.94 L486.10,499.36 L486.44,499.47 L486.78,499.79 L487.11,500.18 L487.45,500.14 L487.79,500.66 L488.12,500.94 L488.46,501.21 L488.80,501.25 L489.14,501.41 L489.48,501.68 L489.81,502.06 L490.15,502.34 L490.49,502.67 L490.83,502.66 L491.16,502.91 L491.50,503.21 L491.84,503.31 L492.18,503.60 L492.51,503.63 L492.85,503.91 L493.19,504.30 L493.53,504.26 L493.86,504.78 L494.20,504.79 L494.54,505.03 L494.88,505.29 L495.21,505.54 L495.55,505.46 L495.89,505.93 L496.23,505.90 L496.56,505.93 L496.90,506.41 L497.24,506.56 L497.58,506.58 L497.91,506.78 L498.25,506.90 L498.59,506.99 L498.93,507.39 L499.26,507.50 L499.60,507.66 L499.94,507.91 L500.28,507.74 L500.61,507.93 L500.95,508.10 L501.29,508.51 L501.62,508.34 L501.96,508.52 L502.30,508.76 L502.64,508.79 L502.98,509.03 L503.31,509.25 L503.65,509.43 L503.99,509.51 L504.33,509.71 L504.66,509.72 L505.00,509.68 L505.34,509.82 L505.68,509.88 L506.01,510.05 L506.35,510.33 L506.69,510.34 L507.03,510.49 L507.36,510.47 L507.70,510.68 L508.04,510.88 L508.38,510.84 L508.71,510.82 L509.05,511.21 L509.39,511.06 L509.73,511.48 L510.06,511.48 L510.40,511.59 L510.74,511.49 L511.08,511.50 L511.41,511.67 L511.75,511.92 L512.09,511.79 L512.42,512.09 L512.76,512.21 L513.10,512.04 L513.44,512.22 L513.78,512.28 L514.11,512.37 L514.45,512.33 L514.79,512.60 L515.12,512.53 L515.46,512.66 L515.80,512.67 L516.14,512.90 L516.48,512.87 L516.81,512.99 L517.15,513.16 L517.49,513.26 L517.83,513.17 L518.16,513.44 L518.50,513.19 L518.84,513.55 L519.17,513.65 L519.51,513.68 L519.85,513.43 L520.19,513.71 L520.53,513.84 L520.86,513.94 L521.20,513.99 L521.54,513.80 L521.88,513.88 L522.21,513.91 L522.55,513.94 L522.89,514.25 L523.23,514.10 L523.56,514.23 L523.90,514.11 L524.24,514.16 L524.58,514.17 L524.91,514.53 L525.25,514.27 L525.59,514.30 L525.92,514.33 L526.26,514.69 L526.60,514.69 L526.94,514.77 L527.28,514.84 L527.61,514.57 L527.95,514.62 L528.29,514.73 L528.62,514.70 L528.96,514.80 L529.30,514.97 L529.64,515.08 L529.98,515.11 L530.31,514.90 L530.65,515.14 L530.99,515.13 L531.33,515.12 L531.66,515.30 L532.00,515.25 L532.34,515.27 L532.67,515.13 L533.01,515.29 L533.35,515.34 L533.69,515.13 L534.03,515.33 L534.36,515.22 L534.70,515.34 L535.04,515.58 L535.38,515.47 L535.71,515.48 L536.05,515.38 L536.39,515.56 L536.73,515.45 L537.06,515.54 L537.40,515.68 L537.74,515.46 L538.08,515.77 L538.41,515.52 L538.75,515.79 L539.09,515.87 L539.42,515.82 L539.76,515.62 L540.10,515.56 L540.44,515.95 L540.78,515.78 L541.11,515.80 L541.45,515.70 L541.79,515.95 L542.12,515.85 L542.46,515.92 L542.80,515.76 L543.14,515.99 L543.48,515.75 L543.81,516.01 L544.15,516.05 L544.49,515.89 L544.83,515.98 L545.16,516.14 L545.50,515.95 L545.84,516.17 L546.17,515.92 L546.51,515.97 L546.85,515.95 L547.19,516.02 L547.53,516.13 L547.86,516.13 L548.20,516.14 L548.54,515.97 L548.88,516.28 L549.21,515.99 L549.55,516.33 L549.89,516.27 L550.23,516.26 L550.56,516.03 L550.90,516.19 L551.24,516.24 L551.58,516.06 L551.91,516.32 L552.25,516.24 L552.59,516.22 L552.92,516.15 L553.26,516.16 L553.60,516.21 L553.94,516.33 L554.28,516.34 L554.61,516.41 L554.95,516.16 L555.29,516.24 L555.62,516.22 L555.96,516.44 L556.30,516.34 L556.64,516.22 L556.98,516.30 L557.31,516.48 L557.65,516.36 L557.99,516.21 L558.33,516.46 L558.66,516.48 L559.00,516.45 L559.34,516.16 L559.67,516.02 L560.01,516.75 L560.35,516.76 L560.69,516.66 L561.03,516.59 L561.36,516.38 L561.70,516.77 L562.04,516.60 L562.38,516.75 L562.71,515.92 L563.05,516.19 L563.39,516.86 L563.73,515.95 L564.06,516.86 L564.40,516.57 L564.74,515.94 L565.08,516.14 L565.41,516.21 L565.75,516.53 L566.09,516.79 L566.42,516.32 L566.76,516.89 L567.10,516.79 L567.44,516.60 L567.78,516.97 L568.11,516.59 L568.45,516.18 L568.79,516.29 L569.12,516.49 L569.46,516.36 L569.80,516.54 L570.14,516.88 L570.48,516.40 L570.81,516.61 L571.15,516.26 L571.49,516.08 L571.83,516.59 L572.16,516.44 L572.50,516.26 L572.84,516.60 L573.17,516.81 L573.51,516.29 L573.85,516.13 L574.19,516.24 L574.53,516.32 L574.86,516.16 L575.20,516.34 L575.54,516.39 L575.88,516.59 L576.21,516.74 L576.55,516.41 L576.89,516.97 L577.23,516.63 L577.56,516.25 L577.90,516.32 L578.24,516.41 L578.58,516.81 L578.91,516.63 L579.25,516.60 L579.59,516.43 L579.92,516.65 L580.26,516.37 L580.60,516.10 L580.94,516.89 L581.28,516.40 L581.61,516.27 L581.95,516.68 L582.29,516.57 L582.62,516.06 L582.96,516.98 L583.30,516.52 L583.64,516.93 L583.98,516.27 L584.31,516.10 L584.65,516.55 L584.99,516.98 L585.33,516.49 L585.66,516.53 L586.00,516.34 L586.34,516.56 L586.67,516.43 L587.01,516.23 L587.35,516.55 L587.69,516.67 L588.03,516.10 L588.36,516.88 L588.70,516.38 L589.04,516.69 L589.38,516.30 L589.71,516.98 L590.05,516.07 L590.39,516.73 L590.73,516.98 L591.06,516.82 L591.40,516.69 L591.74,516.98 L592.08,516.67 L592.41,516.67 L592.75,516.38 L593.09,516.74 L593.42,516.83 L593.76,516.88 L594.10,516.33 L594.44,516.12 L594.78,516.56 L595.11,516.88 L595.45,516.27 L595.79,516.70 L596.12,516.89 L596.46,516.98 L596.80,516.30 L597.14,516.26 L597.48,516.45 L597.81,516.62 L598.15,516.53 L598.49,516.88 L598.83,516.10 L599.16,516.75 L599.50,516.45 L599.84,516.26 L600.17,516.26 L600.51,516.63 L600.85,516.81 L601.19,516.54 L601.53,516.98 L601.86,516.24 L602.20,516.75 L602.54,516.22 L602.88,516.84 L603.21,516.72 L603.55,516.85 L603.89,516.67 L604.23,516.93 L604.56,516.98 L604.90,516.36 L605.24,516.83 L605.58,516.86 L605.91,516.80 L606.25,516.62 L606.59,516.67 L606.92,516.45 L607.26,516.43 L607.60,516.74 L607.94,516.14 L608.28,516.22 L608.61,516.98 L608.95,516.25 L609.29,516.17 L609.62,516.30 L609.96,516.98 L610.30,516.25 L610.64,516.46 L610.98,516.98 L611.31,516.98 L611.65,516.12 L611.99,516.43 L612.33,516.86 L612.66,516.98 L613.00,516.97 L613.34,516.88 L613.67,516.31 L614.01,516.76 L614.35,516.96 L614.69,516.17 L615.03,516.29 L615.36,516.95 L615.70,516.19 L616.04,516.48 L616.38,516.30 L616.71,516.42 L617.05,516.18 L617.39,516.29 L617.73,516.24 L618.06,516.92 L618.40,516.40 L618.74,516.57 L619.08,516.34 L619.41,516.66 L619.75,516.19 L620.09,516.54 L620.42,516.85 L620.76,516.88 L621.10,516.98 L621.44,516.61 L621.78,516.98 L622.11,516.63 L622.45,516.97 L622.79,516.61 L623.12,516.60 L623.46,516.56 L623.80,516.22 L624.14,516.98 L624.48,516.24 L624.81,516.63 L625.15,516.53 L625.49,516.42 L625.83,516.24 L626.16,516.73 L626.50,516.69 L626.84,516.11 L627.17,516.98 L627.51,516.45 L627.85,516.46 L628.19,516.98 L628.53,516.48 L628.86,516.41 L629.20,516.14 L629.54,516.78 L629.88,516.09 L630.21,516.59 L630.55,516.62 L630.89,516.18 L631.23,516.98 L631.56,516.37 L631.90,516.47 L632.24,516.77 L632.58,516.22 L632.91,516.74 L633.25,516.63 L633.59,516.57 L633.92,516.31 L634.26,516.91 L634.60,516.67 L634.94,516.68 L635.28,516.54 L635.61,516.25 L635.95,516.82 L636.29,516.25 L636.62,516.70 L636.96,516.60 L637.30,516.84 L637.64,516.59 L637.98,516.10 L638.31,516.44 L638.65,516.29 L638.99,516.78 L639.33,516.79 L639.66,516.81 L640.00,516.51 L640.34,516.46 L640.67,516.30 L641.01,516.98 L641.35,516.36 L641.69,516.19 L642.03,516.55 L642.36,516.98 L642.70,516.81 L643.04,516.98 L643.38,516.93 L643.71,516.15 L644.05,516.49 L644.39,516.43 L644.73,516.29 L645.06,516.17 L645.40,516.48 L645.74,516.48 L646.08,516.47 L646.41,516.39 L646.75,516.50 L647.09,516.41 L647.42,516.90 L647.76,516.42 L648.10,516.64 L648.44,516.32 L648.78,516.98 L649.11,516.94 L649.45,516.98 L649.79,516.31 L650.12,516.16 L650.46,516.44 L650.80,516.74 L651.14,516.26 L651.48,516.30 L651.81,516.53 L652.15,516.86 L652.49,516.81 L652.83,516.68 L653.16,516.79 L653.50,516.67 L653.84,516.45 L654.17,516.14 L654.51,516.98 L654.85,516.53 L655.19,516.98 L655.53,516.98 L655.86,516.27 L656.20,516.52 L656.54,516.16 L656.88,516.66 L657.21,516.98 L657.55,516.72 L657.89,516.50 L658.23,516.14 L658.56,516.09 L658.90,516.63 L659.24,516.69 L659.58,516.98 L659.91,516.45 L660.25,516.90 L660.59,516.97 L660.92,516.98 L661.26,516.98 L661.60,516.41 L661.94,516.98 L662.28,516.11 L662.61,516.98 L662.95,516.21 L663.29,516.98 L663.62,516.98 L663.96,516.37 L664.30,516.87 L664.64,516.35 L664.98,516.93 L665.31,516.98 L665.65,516.31 L665.99,516.37 L666.33,516.22 L666.66,516.36 L667.00,516.98 L667.34,516.46 L667.68,516.38 L668.01,516.64 L668.35,516.14 L668.69,516.86 L669.02,516.11 L669.36,516.37 L669.70,516.98 L670.04,516.98 L670.38,516.44 L670.71,516.26 L671.05,516.98 L671.39,516.80 L671.73,516.36 L672.06,516.95 L672.40,516.22 L672.74,516.61 L673.08,516.98 L673.41,516.74 L673.75,516.52 L674.09,516.66 L674.43,516.41 L674.76,516.97 L675.10,516.29 L675.44,516.74 L675.78,516.45 L676.11,516.46 L676.45,516.69 L676.79,516.72 L677.12,516.30 L677.46,516.13 L677.80,516.30 L678.14,516.53 L678.48,516.82 L678.81,516.98 L679.15,516.10 L679.49,516.39 L679.83,516.25 L680.16,516.78 L680.50,516.49 L680.84,516.10 L681.18,516.25 L681.51,516.49 L681.85,516.80 L682.19,516.68 L682.53,516.19 L682.86,516.73 L683.20,516.40 L683.54,516.49 L683.88,516.18 L684.21,516.28 L684.55,516.83 L684.89,516.98 L685.23,516.85 L685.56,516.68 L685.90,516.51 L686.24,516.27 L686.58,516.19 L686.91,516.98 L687.25,516.25 L687.59,516.27 L687.93,516.21 L688.26,516.52 L688.60,516.84 L688.94,516.23 L689.28,516.28 L689.61,516.41 L689.95,516.16 L690.29,516.76 L690.62,516.98 L690.96,516.54 L691.30,516.29 L691.64,516.92 L691.98,516.34 L692.31,516.14 L692.65,516.88 L692.99,516.49 L693.33,516.41 L693.66,516.64 L694.00,516.91 L694.34,516.86 L694.68,516.33 L695.01,516.29 L695.35,516.64 L695.69,516.98 L696.03,516.28 L696.36,516.31 L696.70,516.88 L697.04,516.52 L697.38,516.18 L697.71,516.19 L698.05,516.58 L698.39,516.62 L698.73,516.51 L699.06,516.93 L699.40,516.92 L699.74,516.94 L700.08,516.39 L700.41,516.74 L700.75,516.53 L701.09,516.70 L701.43,516.58 L701.76,516.97 L702.10,516.98 L702.44,516.08 L702.78,516.73 L703.11,516.98 L703.45,516.46 L703.79,516.30 L704.12,516.96 L704.46,516.50 L704.80,516.76 L705.14,516.58 L705.48,516.98 L705.81,516.98 L706.15,516.08 L706.49,516.21 L706.83,516.61 L707.16,516.53 L707.50,516.85 L707.84,516.31 L708.18,516.68 L708.51,516.13 L708.85,516.32 L709.19,516.26 L709.53,516.11 L709.86,516.86 L710.20,516.98 L710.54,516.92 L710.88,516.94 L711.21,516.98 L711.55,516.98 L711.89,516.54 L712.23,516.21 L712.56,516.64 L712.90,516.13 L713.24,516.17 L713.58,516.98 L713.91,516.50 L714.25,516.71 L714.59,516.98 L714.93,516.12 L715.26,516.86 L715.60,516.53 L715.94,516.45 L716.28,516.12 L716.61,516.42 L716.95,516.71 L717.29,516.65 L717.62,516.96 L717.96,516.11 L718.30,516.08 L718.64,516.89 L718.98,516.98 L719.31,516.86 L719.65,516.76 L719.99,516.17 L720.33,516.17 L720.66,516.24 L721.00,516.98 L721.34,516.30 L721.68,516.38 L722.01,516.45 L722.35,516.09 L722.69,516.98 L723.03,516.98 L723.36,516.33 L723.70,516.14 L724.04,516.41 L724.38,516.81 L724.71,516.50 L725.05,516.33 L725.39,516.98 L725.73,516.79 L726.06,516.86 L726.40,516.98 L726.74,516.62 L727.08,516.95 L727.41,516.88 L727.75,516.98" fill="none" stroke="#b0483a" stroke-width="0.5"/></svg>
<div class="t" style="left:118.5px;top:69.5px;font-size:6.1px;font-weight:bold;color:#0a0a0a">mW/m²/nm</div>
<div class="t" style="right:860.8px;top:514.00px;font-size:5.8px;font-weight:bold;color:#0a0a0a">0</div>
<div class="t" style="right:860.8px;top:438.58px;font-size:5.8px;font-weight:bold;color:#0a0a0a">10</div>
<div class="t" style="right:860.8px;top:363.16px;font-size:5.8px;font-weight:bold;color:#0a0a0a">20</div>
<div class="t" style="right:860.8px;top:287.74px;font-size:5.8px;font-weight:bold;color:#0a0a0a">30</div>
<div class="t" style="right:860.8px;top:212.32px;font-size:5.8px;font-weight:bold;color:#0a0a0a">40</div>
<div class="t" style="right:860.8px;top:136.90px;font-size:5.8px;font-weight:bold;color:#0a0a0a">50</div>
<div class="t" style="left:154.00px;top:522.2px;width:30px;margin-left:-15px;text-align:center;font-size:5.8px;font-weight:bold;color:#0a0a0a">200</div>
<div class="t" style="left:221.50px;top:522.2px;width:30px;margin-left:-15px;text-align:center;font-size:5.8px;font-weight:bold;color:#0a0a0a">300</div>
<div class="t" style="left:289.00px;top:522.2px;width:30px;margin-left:-15px;text-align:center;font-size:5.8px;font-weight:bold;color:#0a0a0a">400</div>
<div class="t" style="left:356.50px;top:522.2px;width:30px;margin-left:-15px;text-align:center;font-size:5.8px;font-weight:bold;color:#0a0a0a">500</div>
<div class="t" style="left:424.00px;top:522.2px;width:30px;margin-left:-15px;text-align:center;font-size:5.8px;font-weight:bold;color:#0a0a0a">600</div>
<div class="t" style="left:491.50px;top:522.2px;width:30px;margin-left:-15px;text-align:center;font-size:5.8px;font-weight:bold;color:#0a0a0a">700</div>
<div class="t" style="left:559.00px;top:522.2px;width:30px;margin-left:-15px;text-align:center;font-size:5.8px;font-weight:bold;color:#0a0a0a">800</div>
<div class="t" style="left:626.50px;top:522.2px;width:30px;margin-left:-15px;text-align:center;font-size:5.8px;font-weight:bold;color:#0a0a0a">900</div>
<div class="t" style="left:694.00px;top:522.2px;width:30px;margin-left:-15px;text-align:center;font-size:5.8px;font-weight:bold;color:#0a0a0a">1000</div>
<div class="t" style="left:746.8px;top:522.2px;font-size:5.8px;font-weight:bold;color:#0a0a0a">nm</div>
<div class="a" style="left:770px;top:40.8px;width:228px;height:11.5px;background:#ababab"></div>
<div class="t" style="transform:scaleX(0.8696);transform-origin:0 0;left:772.2px;top:42.89px;font-size:6.44px;color:#0a0a0a">Results</div>
<svg class="a" style="left:982.2px;top:43.8px;width:5px;height:5.2px;overflow:visible" viewBox="0 0 5 5.2"><rect x="1.7" y="0.5" width="3" height="2.8" fill="none" stroke="#1a1a1a" stroke-width="0.8"/><rect x="1.7" y="0.3" width="3" height="1" fill="#1a1a1a"/><rect x="0.5" y="1.9" width="3" height="2.8" fill="#ababab" stroke="#1a1a1a" stroke-width="0.8"/><rect x="0.5" y="1.7" width="3" height="1" fill="#1a1a1a"/></svg>
<svg class="a" style="left:991px;top:44.2px;width:4.2px;height:4.6px;overflow:visible" viewBox="0 0 4.2 4.6"><path d="M0.4,0.4 L3.8,4.2 M3.8,0.4 L0.4,4.2" stroke="#1a1a1a" stroke-width="0.95"/></svg>
<div class="a" style="left:768px;top:52.3px;width:230px;height:56px;background:#f0f0f0"></div>
<div class="t" style="transform:scaleX(0.8696);transform-origin:0 0;left:773px;top:56.46px;font-size:6.67px;color:#0a0a0a">Norm</div>
<div class="t" style="transform:scaleX(0.8696);transform-origin:0 0;left:773px;top:66.46px;font-size:6.67px;color:#0a0a0a">Range Min</div>
<div class="t" style="transform:scaleX(0.8696);transform-origin:0 0;left:773px;top:75.46px;font-size:6.67px;color:#0a0a0a">Range Max</div>
<div class="t" style="transform:scaleX(0.8696);transform-origin:0 0;left:773px;top:97.16px;font-size:6.67px;color:#0a0a0a">Ranges</div>
<div class="t" style="transform:scaleX(0.8696);transform-origin:0 0;left:782px;top:84.96px;font-size:6.67px;color:#a8a8a8">Lock range</div>
<div class="a" style="left:773.5px;top:84.6px;width:6.3px;height:6.3px;background:#fff;border:0.6px solid #d0d0d0"></div>
<div class="a" style="left:815px;top:54.3px;width:181px;height:10.3px;background:#cccccc"></div>
<div class="t" style="transform:scaleX(0.8696);transform-origin:0 0;left:817px;top:56.56px;font-size:6.67px;color:#a5a5a5">CIE</div>
<svg class="a" style="left:990px;top:58px;width:5px;height:4px;overflow:visible" viewBox="0 0 5 4"><path d="M0.5,0.8 L4,0.8 L2.25,2.8 Z" fill="#aaa"/></svg>
<div class="a" style="left:815px;top:65px;width:181px;height:8.6px;background:#f0f0f0;border-top:0.6px solid #dedede;border-left:0.6px solid #dedede"></div>
<div class="t" style="transform:scaleX(0.8696);transform-origin:0 0;left:817px;top:66.16px;font-size:6.67px;color:#9a9a9a">200,00</div>
<div class="a" style="left:987.5px;top:65.3px;width:0.6px;height:8px;background:#dedede"></div>
<svg class="a" style="left:990px;top:66px;width:5px;height:7px;overflow:visible" viewBox="0 0 5 7"><path d="M0.8,2.6 L2.25,1 L3.7,2.6 Z M0.8,4.4 L2.25,6 L3.7,4.4 Z" fill="#999"/></svg>
<div class="a" style="left:815px;top:74px;width:181px;height:8.6px;background:#f0f0f0;border-top:0.6px solid #dedede;border-left:0.6px solid #dedede"></div>
<div class="t" style="transform:scaleX(0.8696);transform-origin:0 0;left:817px;top:75.16px;font-size:6.67px;color:#9a9a9a">1050,00</div>
<div class="a" style="left:987.5px;top:74.3px;width:0.6px;height:8px;background:#dedede"></div>
<svg class="a" style="left:990px;top:75px;width:5px;height:7px;overflow:visible" viewBox="0 0 5 7"><path d="M0.8,2.6 L2.25,1 L3.7,2.6 Z M0.8,4.4 L2.25,6 L3.7,4.4 Z" fill="#999"/></svg>
<div class="a" style="left:815px;top:84.3px;width:181px;height:9.8px;background:#cccccc;border-bottom:0.6px solid #e0e0e0"></div>
<div class="t" style="transform:scaleX(0.8696);transform-origin:0 0;left:889px;top:86.16px;font-size:6.67px;color:#858585">Reset range</div>
<div class="a" style="left:815px;top:94.8px;width:181px;height:10.4px;background:#cccccc"></div>
<div class="t" style="transform:scaleX(0.8696);transform-origin:0 0;left:817px;top:97.26px;font-size:6.67px;color:#a5a5a5">400-500</div>
<svg class="a" style="left:990px;top:98.5px;width:5px;height:4px;overflow:visible" viewBox="0 0 5 4"><path d="M0.5,0.8 L4,0.8 L2.25,2.8 Z" fill="#aaa"/></svg>
<div class="a" style="left:769.6px;top:108.6px;width:228px;height:427px;background:#fff;border:0.8px solid #c4c4c4"></div>
<div class="t" style="transform:scaleX(0.8696);transform-origin:0 0;left:772px;top:111.06px;font-size:6.67px;color:#0a0a0a">Name</div>
<div class="t" style="transform:scaleX(0.8696);transform-origin:0 0;left:862.8px;top:111.06px;font-size:6.67px;color:#0a0a0a">Value</div>
<div class="a" style="left:861.3px;top:109.5px;width:0.6px;height:10px;background:#eaeaea"></div>
<svg class="a" style="left:772.4px;top:122.5px;width:6px;height:4px;overflow:visible" viewBox="0 0 6 4"><path d="M0.3,0.4 L2.5,2.7 L4.7,0.4" fill="none" stroke="#4a4a4a" stroke-width="0.9"/></svg>
<div class="t" style="transform:scaleX(0.8696);transform-origin:0 0;left:781.50px;top:121.29px;font-size:6.44px;color:#0a0a0a">Results</div>
<div class="a" style="left:770.6px;top:127.91px;width:226.2px;height:7.81px;background:#f5f5f5"></div>
<svg class="a" style="left:784.3px;top:129.91px;width:4px;height:5px;overflow:visible" viewBox="0 0 4 5"><path d="M0.4,0.3 L2.7,2.2 L0.4,4.1" fill="none" stroke="#777" stroke-width="0.8"/></svg>
<div class="t" style="transform:scaleX(0.8696);transform-origin:0 0;left:792.20px;top:129.10px;font-size:6.44px;color:#0a0a0a">CIE 1931 2° observer</div>
<svg class="a" style="left:784.3px;top:137.72px;width:4px;height:5px;overflow:visible" viewBox="0 0 4 5"><path d="M0.4,0.3 L2.7,2.2 L0.4,4.1" fill="none" stroke="#777" stroke-width="0.8"/></svg>
<div class="t" style="transform:scaleX(0.8696);transform-origin:0 0;left:792.20px;top:136.91px;font-size:6.44px;color:#0a0a0a">CIE 1964 10° observer</div>
<div class="a" style="left:770.6px;top:143.53px;width:226.2px;height:7.81px;background:#f5f5f5"></div>
<svg class="a" style="left:784.3px;top:145.53px;width:4px;height:5px;overflow:visible" viewBox="0 0 4 5"><path d="M0.4,0.3 L2.7,2.2 L0.4,4.1" fill="none" stroke="#777" stroke-width="0.8"/></svg>
<div class="t" style="transform:scaleX(0.8696);transform-origin:0 0;left:792.20px;top:144.72px;font-size:6.44px;color:#0a0a0a">Other</div>
<svg class="a" style="left:784.3px;top:153.34px;width:4px;height:5px;overflow:visible" viewBox="0 0 4 5"><path d="M0.4,0.3 L2.7,2.2 L0.4,4.1" fill="none" stroke="#777" stroke-width="0.8"/></svg>
<div class="t" style="transform:scaleX(0.8696);transform-origin:0 0;left:792.20px;top:152.53px;font-size:6.44px;color:#0a0a0a">Photobiological Safety</div>
<div class="a" style="left:770.6px;top:159.15px;width:226.2px;height:7.81px;background:#f5f5f5"></div>
<svg class="a" style="left:783.2px;top:161.54999999999998px;width:6px;height:4px;overflow:visible" viewBox="0 0 6 4"><path d="M0.3,0.4 L2.5,2.7 L4.7,0.4" fill="none" stroke="#4a4a4a" stroke-width="0.9"/></svg>
<div class="t" style="transform:scaleX(0.8696);transform-origin:0 0;left:792.20px;top:160.34px;font-size:6.44px;color:#0a0a0a">Rendering Indices</div>
<div class="t" style="transform:scaleX(0.8696);transform-origin:0 0;left:802.40px;top:168.15px;font-size:6.44px;color:#0a0a0a">R<sub>a</sub></div>
<div class="t" style="transform:scaleX(0.8696);transform-origin:0 0;left:862.8px;top:168.15px;font-size:6.44px;color:#0a0a0a">76,7</div>
<div class="a" style="left:770.6px;top:174.77px;width:226.2px;height:7.81px;background:#f5f5f5"></div>
<div class="t" style="transform:scaleX(0.8696);transform-origin:0 0;left:802.40px;top:175.96px;font-size:6.44px;color:#0a0a0a">R<sub>1</sub></div>
<div class="t" style="transform:scaleX(0.8696);transform-origin:0 0;left:862.8px;top:175.96px;font-size:6.44px;color:#0a0a0a">78,9</div>
<div class="t" style="transform:scaleX(0.8696);transform-origin:0 0;left:802.40px;top:183.77px;font-size:6.44px;color:#0a0a0a">R<sub>2</sub></div>
<div class="t" style="transform:scaleX(0.8696);transform-origin:0 0;left:862.8px;top:183.77px;font-size:6.44px;color:#0a0a0a">78,6</div>
<div class="a" style="left:770.6px;top:190.39px;width:226.2px;height:7.81px;background:#f5f5f5"></div>
<div class="t" style="transform:scaleX(0.8696);transform-origin:0 0;left:802.40px;top:191.58px;font-size:6.44px;color:#0a0a0a">R<sub>3</sub></div>
<div class="t" style="transform:scaleX(0.8696);transform-origin:0 0;left:862.8px;top:191.58px;font-size:6.44px;color:#0a0a0a">73,2</div>
<div class="t" style="transform:scaleX(0.8696);transform-origin:0 0;left:802.40px;top:199.39px;font-size:6.44px;color:#0a0a0a">R<sub>4</sub></div>
<div class="t" style="transform:scaleX(0.8696);transform-origin:0 0;left:862.8px;top:199.39px;font-size:6.44px;color:#0a0a0a">80,4</div>
<div class="a" style="left:770.6px;top:206.01px;width:226.2px;height:7.81px;background:#f5f5f5"></div>
<div class="t" style="transform:scaleX(0.8696);transform-origin:0 0;left:802.40px;top:207.20px;font-size:6.44px;color:#0a0a0a">R<sub>5</sub></div>
<div class="t" style="transform:scaleX(0.8696);transform-origin:0 0;left:862.8px;top:207.20px;font-size:6.44px;color:#0a0a0a">78,6</div>
<div class="t" style="transform:scaleX(0.8696);transform-origin:0 0;left:802.40px;top:215.01px;font-size:6.44px;color:#0a0a0a">R<sub>6</sub></div>
<div class="t" style="transform:scaleX(0.8696);transform-origin:0 0;left:862.8px;top:215.01px;font-size:6.44px;color:#0a0a0a">68,6</div>
<div class="a" style="left:770.6px;top:221.63px;width:226.2px;height:7.81px;background:#f5f5f5"></div>
<div class="t" style="transform:scaleX(0.8696);transform-origin:0 0;left:802.40px;top:222.82px;font-size:6.44px;color:#0a0a0a">R<sub>7</sub></div>
<div class="t" style="transform:scaleX(0.8696);transform-origin:0 0;left:862.8px;top:222.82px;font-size:6.44px;color:#0a0a0a">82,7</div>
<div class="t" style="transform:scaleX(0.8696);transform-origin:0 0;left:802.40px;top:230.63px;font-size:6.44px;color:#0a0a0a">R<sub>8</sub></div>
<div class="t" style="transform:scaleX(0.8696);transform-origin:0 0;left:862.8px;top:230.63px;font-size:6.44px;color:#0a0a0a">72,5</div>
<div class="a" style="left:770.6px;top:237.25px;width:226.2px;height:7.81px;background:#f5f5f5"></div>
<div class="t" style="transform:scaleX(0.8696);transform-origin:0 0;left:802.40px;top:238.44px;font-size:6.44px;color:#0a0a0a">R<sub>9</sub></div>
<div class="t" style="transform:scaleX(0.8696);transform-origin:0 0;left:862.8px;top:238.44px;font-size:6.44px;color:#0a0a0a">6,5</div>
<div class="t" style="transform:scaleX(0.8696);transform-origin:0 0;left:802.40px;top:246.25px;font-size:6.44px;color:#0a0a0a">R<sub>10</sub></div>
<div class="t" style="transform:scaleX(0.8696);transform-origin:0 0;left:862.8px;top:246.25px;font-size:6.44px;color:#0a0a0a">44,3</div>
<div class="a" style="left:770.6px;top:252.87px;width:226.2px;height:7.81px;background:#f5f5f5"></div>
<div class="t" style="transform:scaleX(0.8696);transform-origin:0 0;left:802.40px;top:254.06px;font-size:6.44px;color:#0a0a0a">R<sub>11</sub></div>
<div class="t" style="transform:scaleX(0.8696);transform-origin:0 0;left:862.8px;top:254.06px;font-size:6.44px;color:#0a0a0a">78,9</div>
<div class="t" style="transform:scaleX(0.8696);transform-origin:0 0;left:802.40px;top:261.87px;font-size:6.44px;color:#0a0a0a">R<sub>12</sub></div>
<div class="t" style="transform:scaleX(0.8696);transform-origin:0 0;left:862.8px;top:261.87px;font-size:6.44px;color:#0a0a0a">44,7</div>
<div class="a" style="left:770.6px;top:268.49px;width:226.2px;height:7.81px;background:#f5f5f5"></div>
<div class="t" style="transform:scaleX(0.8696);transform-origin:0 0;left:802.40px;top:269.68px;font-size:6.44px;color:#0a0a0a">R<sub>13</sub></div>
<div class="t" style="transform:scaleX(0.8696);transform-origin:0 0;left:862.8px;top:269.68px;font-size:6.44px;color:#0a0a0a">77,9</div>
<div class="t" style="transform:scaleX(0.8696);transform-origin:0 0;left:802.40px;top:277.49px;font-size:6.44px;color:#0a0a0a">R<sub>14</sub></div>
<div class="t" style="transform:scaleX(0.8696);transform-origin:0 0;left:862.8px;top:277.49px;font-size:6.44px;color:#0a0a0a">84,5</div>
<div class="a" style="left:770.6px;top:284.11px;width:226.2px;height:7.81px;background:#f5f5f5"></div>
<div class="t" style="transform:scaleX(0.8696);transform-origin:0 0;left:802.40px;top:285.30px;font-size:6.44px;color:#0a0a0a">R<sub>15</sub></div>
<div class="t" style="transform:scaleX(0.8696);transform-origin:0 0;left:862.8px;top:285.30px;font-size:6.44px;color:#0a0a0a">78,0</div>
<svg class="a" style="left:784.3px;top:293.91999999999996px;width:4px;height:5px;overflow:visible" viewBox="0 0 4 5"><path d="M0.4,0.3 L2.7,2.2 L0.4,4.1" fill="none" stroke="#777" stroke-width="0.8"/></svg>
<div class="t" style="transform:scaleX(0.8696);transform-origin:0 0;left:792.20px;top:293.11px;font-size:6.44px;color:#0a0a0a">Metamerism Indices</div>
<div class="a" style="left:770.6px;top:299.73px;width:226.2px;height:7.81px;background:#f5f5f5"></div>
<svg class="a" style="left:784.3px;top:301.73px;width:4px;height:5px;overflow:visible" viewBox="0 0 4 5"><path d="M0.4,0.3 L2.7,2.2 L0.4,4.1" fill="none" stroke="#777" stroke-width="0.8"/></svg>
<div class="t" style="transform:scaleX(0.8696);transform-origin:0 0;left:792.20px;top:300.92px;font-size:6.44px;color:#0a0a0a">TM-30-15 Main</div>
<svg class="a" style="left:784.3px;top:309.53999999999996px;width:4px;height:5px;overflow:visible" viewBox="0 0 4 5"><path d="M0.4,0.3 L2.7,2.2 L0.4,4.1" fill="none" stroke="#777" stroke-width="0.8"/></svg>
<div class="t" style="transform:scaleX(0.8696);transform-origin:0 0;left:792.20px;top:308.73px;font-size:6.44px;color:#0a0a0a">TM-30-15 Hue Bin Fidelit...</div>
<div class="a" style="left:770.6px;top:315.35px;width:226.2px;height:7.81px;background:#f5f5f5"></div>
<svg class="a" style="left:784.3px;top:317.35px;width:4px;height:5px;overflow:visible" viewBox="0 0 4 5"><path d="M0.4,0.3 L2.7,2.2 L0.4,4.1" fill="none" stroke="#777" stroke-width="0.8"/></svg>
<div class="t" style="transform:scaleX(0.8696);transform-origin:0 0;left:792.20px;top:316.54px;font-size:6.44px;color:#0a0a0a">TM-30-15 Hue Bin Chang...</div>
<svg class="a" style="left:784.3px;top:325.15999999999997px;width:4px;height:5px;overflow:visible" viewBox="0 0 4 5"><path d="M0.4,0.3 L2.7,2.2 L0.4,4.1" fill="none" stroke="#777" stroke-width="0.8"/></svg>
<div class="t" style="transform:scaleX(0.8696);transform-origin:0 0;left:792.20px;top:324.35px;font-size:6.44px;color:#0a0a0a">TM-30-15 Fidelity Index ...</div>
<div class="a" style="left:770.6px;top:330.97px;width:226.2px;height:7.81px;background:#f5f5f5"></div>
<svg class="a" style="left:783.2px;top:333.36999999999995px;width:6px;height:4px;overflow:visible" viewBox="0 0 6 4"><path d="M0.3,0.4 L2.5,2.7 L4.7,0.4" fill="none" stroke="#4a4a4a" stroke-width="0.9"/></svg>
<div class="t" style="transform:scaleX(0.8696);transform-origin:0 0;left:792.20px;top:332.16px;font-size:6.44px;color:#0a0a0a">Human Centric Lighting</div>
<div class="t" style="transform:scaleX(0.8696);transform-origin:0 0;left:802.40px;top:339.97px;font-size:6.44px;color:#0a0a0a">EML</div>
<div class="t" style="transform:scaleX(0.8696);transform-origin:0 0;left:862.8px;top:339.97px;font-size:6.44px;color:#0a0a0a">-</div>
<div class="a" style="left:770.6px;top:346.59px;width:226.2px;height:7.81px;background:#f5f5f5"></div>
<div class="t" style="transform:scaleX(0.8696);transform-origin:0 0;left:802.40px;top:347.78px;font-size:6.44px;color:#0a0a0a">Melanopic ratio</div>
<div class="t" style="transform:scaleX(0.8696);transform-origin:0 0;left:862.8px;top:347.78px;font-size:6.44px;color:#0a0a0a">-</div>
<div class="a" style="left:0;top:536px;width:998px;height:12px;background:#f0f0f0"></div>
<div class="a" style="left:160px;top:536.8px;width:809px;height:10.8px;background:#e8e8e8;border:0.7px solid #d6d6d6"></div>
<div class="a" style="left:157.5px;top:537px;width:0.6px;height:10.5px;background:#e2e2e2"></div>
<div class="t" style="transform:scaleX(0.8696);transform-origin:0 0;left:973px;top:538.46px;font-size:6.67px;color:#0a0a0a">0%</div>
<div class="a" style="left:988px;top:537px;width:0.6px;height:10px;background:#dadada"></div>
<div class="a" style="left:0;top:548px;width:25px;height:1px;background:#1e1e1e"></div>
<div class="a" style="left:204px;top:548px;width:794px;height:1px;background:#1e1e1e"></div>
</body></html>
